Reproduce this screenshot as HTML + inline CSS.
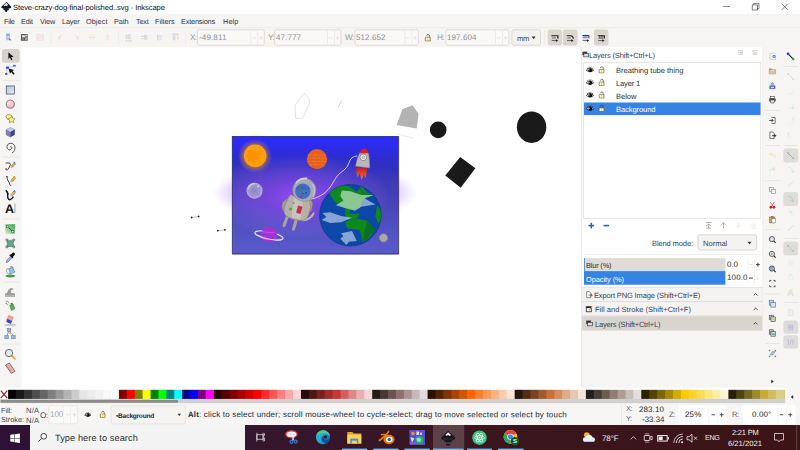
<!DOCTYPE html>
<html><head><meta charset="utf-8"><title>Inkscape</title>
<style>
html,body{margin:0;padding:0;}
body{width:800px;height:450px;overflow:hidden;position:relative;background:#f6f5f4;font-family:"Liberation Sans",sans-serif;}
.t{position:absolute;white-space:nowrap;display:block;transform:rotate(0.03deg);transform-origin:0 0;}
.r{position:absolute;box-sizing:border-box;}
svg{position:absolute;overflow:visible;}
</style></head><body>
<svg style="left:-1px;top:-1px" width="802" height="16"><rect x="1.00" y="1.00" width="800.00" height="14.00" rx="0.00" fill="#ffffff"/></svg>
<span class="t" style="left:13.00px;top:2.74px;font-size:7.6px;line-height:9.12px;color:#111;letter-spacing:-0.084px;">Steve-crazy-dog-final-polished..svg - Inkscape</span>
<svg style="left:0px;top:1px" width="13" height="13"><svg x="0.80" y="0.60" width="11.0" height="11.0" viewBox="0 0 22 22" overflow="visible"><path d="M10.500 1.500Q11.500 0.500 12.500 1.500L20.500 10Q22 12 19.500 13L15 14.500 16.500 17 13.500 17.500 12 21 9 20.500 8 17.500 5 17 6 14.500 2 13Q-0.500 12 1.500 10Z" fill="#15151f"/><path d="M11 2.500L5.500 8 8 9.500 10 8 12 9.500 13.500 7.500 15 7Z" fill="#e4e4ec"/><path d="M4 13.500Q11 16 18 13.500" stroke="#4a4a5a" stroke-width="0.800" fill="none"/></svg></svg>
<svg style="left:0;top:0" width="800" height="14"><path d="M723 6.500h7" stroke="#444" stroke-width="0.600" fill="none"/><path d="M752.300 4.800h5.200v5.200h-5.200z M753.800 4.800v-1.400h5.200v5.200h-1.500" stroke="#333" stroke-width="0.600" fill="none"/><path d="M781.700 3.700l6.200 6.200M787.900 3.700l-6.200 6.200" stroke="#333" stroke-width="0.600" fill="none"/></svg>
<svg style="left:-1px;top:13px" width="802" height="16"><rect x="1.00" y="1.00" width="800.00" height="14.00" rx="0.00" fill="#f6f5f4"/></svg>
<span class="t" style="left:4.00px;top:17.82px;font-size:7.3px;line-height:8.76px;color:#2e3846;letter-spacing:-0.316px;">File</span>
<span class="t" style="left:21.00px;top:17.82px;font-size:7.3px;line-height:8.76px;color:#2e3846;letter-spacing:-0.145px;">Edit</span>
<span class="t" style="left:40.00px;top:17.82px;font-size:7.3px;line-height:8.76px;color:#2e3846;letter-spacing:-0.173px;">View</span>
<span class="t" style="left:62.00px;top:17.82px;font-size:7.3px;line-height:8.76px;color:#2e3846;letter-spacing:-0.152px;">Layer</span>
<span class="t" style="left:86.00px;top:17.82px;font-size:7.3px;line-height:8.76px;color:#2e3846;letter-spacing:0.067px;">Object</span>
<span class="t" style="left:114.00px;top:17.82px;font-size:7.3px;line-height:8.76px;color:#2e3846;letter-spacing:-0.129px;">Path</span>
<span class="t" style="left:136.00px;top:17.82px;font-size:7.3px;line-height:8.76px;color:#2e3846;letter-spacing:-0.222px;">Text</span>
<span class="t" style="left:155.00px;top:17.82px;font-size:7.3px;line-height:8.76px;color:#2e3846;letter-spacing:-0.053px;">Filters</span>
<span class="t" style="left:181.00px;top:17.82px;font-size:7.3px;line-height:8.76px;color:#2e3846;letter-spacing:-0.171px;">Extensions</span>
<span class="t" style="left:222.50px;top:17.82px;font-size:7.3px;line-height:8.76px;color:#2e3846;letter-spacing:0.122px;">Help</span>
<svg style="left:-1px;top:26px" width="802" height="4"><rect x="1.00" y="1.60" width="800.00" height="0.80" rx="0.00" fill="#e4e1de"/></svg>
<svg style="left:-1px;top:27px" width="802" height="22"><rect x="1.00" y="1.40" width="800.00" height="18.80" rx="0.00" fill="#f6f5f4"/></svg>
<svg style="left:3px;top:32px" width="11" height="11"><svg x="0.80" y="0.90" width="9" height="9" viewBox="0 0 16 16" overflow="visible"><rect x="4" y="1" width="7" height="12" fill="#a9c4ec"/><rect x="5" y="2" width="5" height="3" fill="#7ea2dc"/><path d="M5 6h5M5 8h5" stroke="#dfe9f8" stroke-width="0.800"/><path d="M9 9.500l4.500 3.500-2.500 0 1 2.500" fill="#333"/></svg></svg>
<svg style="left:19px;top:32px" width="11" height="11"><svg x="0.80" y="0.90" width="9" height="9" viewBox="0 0 16 16" overflow="visible"><rect x="2" y="2" width="12" height="12" fill="#555"/><rect x="4" y="4" width="5" height="4" fill="#e4e4e4"/><rect x="9.500" y="8" width="3.500" height="5" fill="#aaa"/><rect x="9.500" y="3.500" width="3.500" height="3" fill="#ccc"/><rect x="4" y="9.500" width="4" height="3" fill="#888"/></svg></svg>
<svg style="left:35px;top:32px" width="11" height="11"><svg x="0.80" y="0.90" width="9" height="9" viewBox="0 0 16 16" overflow="visible"><rect x="2" y="3" width="12" height="10" fill="#f6ebe8" stroke="#f0d6d2"/><path d="M4 10l4-4 3 3 3-2" stroke="#e8d6cf" fill="none"/></svg></svg>
<svg style="left:49px;top:29px" width="4" height="17"><rect x="1.60" y="1.50" width="0.70" height="14.50" rx="0.00" fill="#ebe9e6"/></svg>
<svg style="left:56px;top:33px" width="10" height="10"><svg x="0.50" y="0.50" width="8" height="8" viewBox="0 0 16 16" overflow="visible"><path d="M11 3q-6 1-7 6l3 4m-3-4l5-1" stroke="#f7dcc2" stroke-width="2" fill="none"/></svg></svg>
<svg style="left:72px;top:33px" width="10" height="10"><svg x="0.50" y="0.50" width="8" height="8" viewBox="0 0 16 16" overflow="visible"><path d="M5 3q6 1 7 6l-3 4m3-4l-5-1" stroke="#f7dcc2" stroke-width="2" fill="none"/></svg></svg>
<svg style="left:88px;top:33px" width="10" height="10"><svg x="0.00" y="0.50" width="8" height="8" viewBox="0 0 16 16" overflow="visible"><path d="M2 8h12M2 8l4-4M2 8l4 4M14 8l-4-4M14 8l-4 4" stroke="#f8e0c8" stroke-width="1.800" fill="none"/></svg></svg>
<svg style="left:104px;top:34px" width="9" height="9"><svg x="0.20" y="0.00" width="7" height="7" viewBox="0 0 16 16" overflow="visible"><path d="M8 2v12M8 2l-3.500 3.500M8 2l3.500 3.500M8 14l-3.500-3.500M8 14l3.500-3.500" stroke="#f8e0c8" stroke-width="2" fill="none"/></svg></svg>
<svg style="left:117px;top:29px" width="4" height="17"><rect x="1.40" y="1.50" width="0.70" height="14.50" rx="0.00" fill="#ebe9e6"/></svg>
<svg style="left:124px;top:33px" width="11" height="11"><svg x="0.00" y="0.00" width="9" height="9" viewBox="0 0 16 16" overflow="visible"><path d="M2 14h12" stroke="#c9c9cc" stroke-width="1.6"/><rect x="6" y="2" width="6" height="9" fill="#dcdde2"/><path d="M4 3v8" stroke="#cfd0d6" stroke-width="1.5"/></svg></svg>
<svg style="left:140px;top:33px" width="11" height="11"><svg x="0.00" y="0.00" width="9" height="9" viewBox="0 0 16 16" overflow="visible"><rect x="7" y="3" width="6" height="9" fill="#dcdde2"/><path d="M2 6h6M2 10h4" stroke="#cfd0d6" stroke-width="1.5"/></svg></svg>
<svg style="left:155px;top:33px" width="11" height="11"><svg x="0.20" y="0.00" width="9" height="9" viewBox="0 0 16 16" overflow="visible"><rect x="3" y="3" width="3" height="10" fill="#d5d6dc"/><rect x="7" y="4" width="6" height="4" fill="#e0e1e6"/><path d="M7 11h4" stroke="#cfd0d6" stroke-width="1.5"/></svg></svg>
<svg style="left:171px;top:33px" width="11" height="11"><svg x="0.00" y="0.00" width="9" height="9" viewBox="0 0 16 16" overflow="visible"><path d="M2 2h12" stroke="#c9c9cc" stroke-width="1.6"/><rect x="3" y="4" width="5" height="9" fill="#dcdde2"/><path d="M12 4v8" stroke="#cfd0d6" stroke-width="1.5"/></svg></svg>
<svg style="left:184px;top:29px" width="4" height="17"><rect x="1.40" y="1.50" width="0.70" height="14.50" rx="0.00" fill="#ebe9e6"/></svg>
<span class="t" style="left:190.00px;top:32.98px;font-size:8.2px;line-height:9.84px;color:#9a9996;letter-spacing:-0.724px;">X:</span><svg style="left:196px;top:28px" width="70" height="19"><rect x="1.40" y="1.80" width="66.90" height="15.40" rx="1.80" fill="#faf9f8" stroke="#d8d4d0" stroke-width="0.8"/></svg><span class="t" style="left:198.60px;top:33.10px;font-size:8.0px;line-height:9.60px;color:#8b8e96;letter-spacing:0.138px;">-49.811</span><svg style="left:249px;top:29px" width="4" height="17"><rect x="1.50" y="1.00" width="0.70" height="15.00" rx="0.00" fill="#e9e6e3"/></svg><svg style="left:256px;top:29px" width="4" height="17"><rect x="1.40" y="1.00" width="0.70" height="15.00" rx="0.00" fill="#e9e6e3"/></svg><svg style="left:251px;top:36px" width="6" height="4"><rect x="1.30" y="1.60" width="3.60" height="0.70" rx="0.00" fill="#dedcd9"/></svg><svg style="left:258px;top:36px" width="6" height="4"><rect x="1.20" y="1.60" width="3.60" height="0.70" rx="0.00" fill="#dedcd9"/></svg><svg style="left:259px;top:35px" width="4" height="6"><rect x="1.65" y="1.10" width="0.70" height="3.60" rx="0.00" fill="#dedcd9"/></svg>
<span class="t" style="left:267.60px;top:32.98px;font-size:8.2px;line-height:9.84px;color:#9a9996;letter-spacing:-0.748px;">Y:</span><svg style="left:273px;top:28px" width="70" height="19"><rect x="1.70" y="1.80" width="66.20" height="15.40" rx="1.80" fill="#faf9f8" stroke="#d8d4d0" stroke-width="0.8"/></svg><span class="t" style="left:275.90px;top:33.10px;font-size:8.0px;line-height:9.60px;color:#8b8e96;letter-spacing:0.089px;">47.777</span><svg style="left:326px;top:29px" width="3" height="17"><rect x="1.10" y="1.00" width="0.70" height="15.00" rx="0.00" fill="#e9e6e3"/></svg><svg style="left:333px;top:29px" width="3" height="17"><rect x="1.00" y="1.00" width="0.70" height="15.00" rx="0.00" fill="#e9e6e3"/></svg><svg style="left:327px;top:36px" width="7" height="4"><rect x="1.90" y="1.60" width="3.60" height="0.70" rx="0.00" fill="#dedcd9"/></svg><svg style="left:334px;top:36px" width="7" height="4"><rect x="1.80" y="1.60" width="3.60" height="0.70" rx="0.00" fill="#dedcd9"/></svg><svg style="left:336px;top:35px" width="3" height="6"><rect x="1.25" y="1.10" width="0.70" height="3.60" rx="0.00" fill="#dedcd9"/></svg>
<span class="t" style="left:344.60px;top:32.98px;font-size:8.2px;line-height:9.84px;color:#9a9996;letter-spacing:-0.735px;">W:</span><svg style="left:353px;top:28px" width="67" height="19"><rect x="1.90" y="1.80" width="63.50" height="15.40" rx="1.80" fill="#faf9f8" stroke="#d8d4d0" stroke-width="0.8"/></svg><span class="t" style="left:356.10px;top:33.10px;font-size:8.0px;line-height:9.60px;color:#8b8e96;letter-spacing:0.098px;">512.652</span><svg style="left:403px;top:29px" width="4" height="17"><rect x="1.60" y="1.00" width="0.70" height="15.00" rx="0.00" fill="#e9e6e3"/></svg><svg style="left:410px;top:29px" width="4" height="17"><rect x="1.50" y="1.00" width="0.70" height="15.00" rx="0.00" fill="#e9e6e3"/></svg><svg style="left:405px;top:36px" width="7" height="4"><rect x="1.40" y="1.60" width="3.60" height="0.70" rx="0.00" fill="#dedcd9"/></svg><svg style="left:412px;top:36px" width="6" height="4"><rect x="1.30" y="1.60" width="3.60" height="0.70" rx="0.00" fill="#dedcd9"/></svg><svg style="left:413px;top:35px" width="4" height="6"><rect x="1.75" y="1.10" width="0.70" height="3.60" rx="0.00" fill="#dedcd9"/></svg>
<span class="t" style="left:437.20px;top:32.98px;font-size:8.2px;line-height:9.84px;color:#9a9996;letter-spacing:-0.600px;">H:</span><svg style="left:444px;top:28px" width="67" height="19"><rect x="1.90" y="1.80" width="63.10" height="15.40" rx="1.80" fill="#faf9f8" stroke="#d8d4d0" stroke-width="0.8"/></svg><span class="t" style="left:447.10px;top:33.10px;font-size:8.0px;line-height:9.60px;color:#8b8e96;letter-spacing:0.098px;">197.604</span><svg style="left:494px;top:29px" width="3" height="17"><rect x="1.20" y="1.00" width="0.70" height="15.00" rx="0.00" fill="#e9e6e3"/></svg><svg style="left:501px;top:29px" width="3" height="17"><rect x="1.10" y="1.00" width="0.70" height="15.00" rx="0.00" fill="#e9e6e3"/></svg><svg style="left:496px;top:36px" width="6" height="4"><rect x="1.00" y="1.60" width="3.60" height="0.70" rx="0.00" fill="#dedcd9"/></svg><svg style="left:502px;top:36px" width="7" height="4"><rect x="1.90" y="1.60" width="3.60" height="0.70" rx="0.00" fill="#dedcd9"/></svg><svg style="left:504px;top:35px" width="4" height="6"><rect x="1.35" y="1.10" width="0.70" height="3.60" rx="0.00" fill="#dedcd9"/></svg>
<svg style="left:423px;top:33px" width="10" height="10"><svg x="0.50" y="0.50" width="8" height="8" viewBox="0 0 15 15" overflow="visible"><path d="M11.300 7.200V4.600Q11.300 1.800 8.600 1.800T5.800 4.400" stroke="#3a3a3a" stroke-width="1.200" fill="none"/><rect x="3.200" y="7" width="9.800" height="7" rx="0.500" fill="#ead65a" stroke="#44443a" stroke-width="0.900"/><rect x="4.800" y="8.200" width="2.200" height="4.800" fill="#fffdf0"/><rect x="8.800" y="8.200" width="2.200" height="4.800" fill="#fff7b8"/></svg></svg>
<svg style="left:510px;top:28px" width="32" height="19"><rect x="1.90" y="1.80" width="28.60" height="15.40" rx="1.80" fill="#f3f2f0" stroke="#d5d1cd" stroke-width="0.8"/></svg>
<span class="t" style="left:517.00px;top:33.64px;font-size:7.6px;line-height:9.12px;color:#3a4356;letter-spacing:-0.431px;">mm</span>
<svg style="left:531px;top:36px" width="6" height="5"><svg x="0.60" y="0.60" width="4.0" height="3.0" viewBox="0 0 4 3" overflow="visible"><path d="M0 0h4l-2 2.6z" fill="#333"/></svg></svg>
<svg style="left:543px;top:29px" width="3" height="17"><rect x="1.20" y="1.50" width="0.70" height="14.50" rx="0.00" fill="#ebe9e6"/></svg>
<svg style="left:546px;top:28px" width="17" height="19"><rect x="1.70" y="1.40" width="14.20" height="16.20" rx="2.40" fill="#d9d5d1"/></svg>
<svg style="left:561px;top:28px" width="18" height="19"><rect x="1.80" y="1.40" width="14.70" height="16.20" rx="2.40" fill="#d9d5d1"/></svg>
<svg style="left:593px;top:28px" width="17" height="19"><rect x="1.00" y="1.40" width="14.40" height="16.20" rx="2.40" fill="#d9d5d1"/></svg>
<svg style="left:550px;top:33px" width="11" height="11"><svg x="0.30" y="0.50" width="9" height="9" viewBox="0 0 16 16" overflow="visible"><path d="M2 4h11.500v5" stroke="#1e1e1e" stroke-width="2.200" fill="none"/><path d="M3 8h7" stroke="#1e1e1e" stroke-width="1" fill="none"/><path d="M2.500 12.500h9" stroke="#1e1e1e" stroke-width="1.100"/><path d="M10 10l4 2.500-4 2.500z" fill="#1e1e1e"/></svg></svg>
<svg style="left:565px;top:33px" width="11" height="11"><svg x="0.70" y="0.50" width="9" height="9" viewBox="0 0 16 16" overflow="visible"><path d="M2 4h7q4.500 0 4.500 5.500" stroke="#1e1e1e" stroke-width="1.800" fill="none"/><path d="M3 8h6" stroke="#1e1e1e" stroke-width="1" fill="none"/><path d="M2.500 12.500h9" stroke="#1e1e1e" stroke-width="1.100"/><path d="M10 10l4 2.500-4 2.500z" fill="#1e1e1e"/></svg></svg>
<svg style="left:581px;top:33px" width="11" height="11"><svg x="0.30" y="0.50" width="9" height="9" viewBox="0 0 16 16" overflow="visible"><path d="M2 3.500h11.500v5" stroke="#1e1e1e" stroke-width="1.600" fill="none"/><path d="M2.500 6.500h9" stroke="#4a7fe0" stroke-width="2.400"/><path d="M3 9.500h7" stroke="#9ab0d8" stroke-width="1.200" fill="none"/><path d="M2.500 12.500h9" stroke="#1e1e1e" stroke-width="1.100"/><path d="M10 10l4 2.500-4 2.500z" fill="#1e1e1e"/></svg></svg>
<svg style="left:596px;top:33px" width="11" height="11"><svg x="0.70" y="0.50" width="9" height="9" viewBox="0 0 16 16" overflow="visible"><path d="M2 4h11.500v5" stroke="#1e1e1e" stroke-width="2.200" fill="none"/><path d="M5.500 4v4.500M9.500 4v4.500" stroke="#1e1e1e" stroke-width="1.400"/><path d="M3 8.500h9" stroke="#1e1e1e" stroke-width="1" stroke-dasharray="2 1" fill="none"/><path d="M2.500 12.500h9" stroke="#1e1e1e" stroke-width="1.100"/><path d="M10 10l4 2.500-4 2.500z" fill="#1e1e1e"/></svg></svg>
<svg style="left:20px;top:46px" width="563" height="345"><rect x="1.60" y="1.30" width="560.00" height="342.00" rx="0.00" fill="#ffffff"/></svg>
<svg style="left:580px;top:46px" width="4" height="345"><rect x="1.20" y="1.30" width="0.90" height="342.00" rx="0.00" fill="#e6e4e1"/></svg>
<svg style="left:0px;top:48px" width="21" height="16"><rect x="1.90" y="1.00" width="17.70" height="13.70" rx="2.60" fill="#d6d1cd"/></svg>
<svg style="left:5px;top:51px" width="12" height="12"><svg x="0.60" y="0.40" width="9.6" height="9.6" viewBox="0 0 24 24" overflow="visible"><path d="M7 2v17l4-4 3 7 3-1.4-3-6.6h6z" fill="#111"/></svg></svg>
<svg style="left:3px;top:63px" width="15" height="15"><svg x="0.80" y="0.70" width="13" height="13" viewBox="0 0 24 24" overflow="visible"><path d="M4.400 19L6.800 7.400 19.200 3.900" stroke="#a9a9ee" stroke-width="1.100" fill="none"/><rect x="4.300" y="5.200" width="5" height="4.200" fill="#3b3bf0"/><rect x="17" y="2.200" width="5" height="3.200" fill="#5a5af5"/><rect x="2.300" y="17" width="4.400" height="3.800" fill="#5a5af5"/><path d="M8.700 8.900L19 11.500 15.800 13.600 20 18.600 17.600 20.400 13.600 15.400 11.400 18.600z" fill="#111"/></svg></svg>
<svg style="left:1px;top:79px" width="20" height="3"><rect x="1.30" y="1.00" width="17.00" height="0.70" rx="0.00" fill="#e3e0dd"/></svg>
<svg style="left:5px;top:85px" width="12" height="12"><svg x="0.70" y="0.40" width="9.4" height="9.4" viewBox="0 0 10 10" overflow="visible"><defs><linearGradient id="rg" x1="0" y1="0" x2="1" y2="1"><stop offset="0" stop-color="#a9c3e6"/><stop offset="1" stop-color="#e6eef9"/></linearGradient></defs><rect x="0.6" y="0.6" width="8.6" height="8.6" fill="url(#rg)" stroke="#5a5f6b" stroke-width="0.9"/></svg></svg>
<svg style="left:5px;top:99px" width="12" height="12"><svg x="0.60" y="0.50" width="9.4" height="9.4" viewBox="0 0 10 10" overflow="visible"><defs><radialGradient id="cg" cx="0.4" cy="0.35" r="0.7"><stop offset="0" stop-color="#ffe3e6"/><stop offset="1" stop-color="#f5a8b2"/></radialGradient></defs><circle cx="5" cy="5" r="4.3" fill="url(#cg)" stroke="#6b5a5f" stroke-width="0.8"/></svg></svg>
<svg style="left:4px;top:112px" width="14" height="14"><svg x="0.55" y="0.55" width="11.5" height="11.5" viewBox="0 0 24 24" overflow="visible"><path d="M6 4l8 1 3 5-5 6-7-3-2-5z" fill="#f7ec9a" stroke="#8a7a30" stroke-width="1.4"/><path d="M15 8l2 4 5 1-4 3.5 1 5-4.5-2.5-4.500 2.500 1-5-4-3.500 5-1z" fill="#f9f08c" stroke="#8a7a30" stroke-width="1.3"/></svg></svg>
<svg style="left:4px;top:126px" width="14" height="14"><svg x="0.70" y="0.80" width="11.2" height="11.2" viewBox="0 0 24 24" overflow="visible"><path d="M12 2l9 4v11l-9 5-9-5V6z" fill="#8e93c9" stroke="#3c3f6b" stroke-width="0.8"/><path d="M12 2l9 4-9 5-9-5z" fill="#c9ccec"/><path d="M12 11l9-5v11l-9 5z" fill="#3f447f"/><path d="M3 6l9 5v11l-9-5z" fill="#7c81bd"/></svg></svg>
<svg style="left:3px;top:140px" width="15" height="15"><svg x="0.50" y="0.30" width="13" height="13" viewBox="0 0 24 24" overflow="visible"><path d="M12.500 12q1.500-1.500 2.500 0.500t-1 4-5 0.500-2.500-6 5.500-5.500 8 3.500 0 10-4 3.500" stroke="#3a3a3a" stroke-width="1.500" fill="none"/></svg></svg>
<svg style="left:1px;top:155px" width="20" height="4"><rect x="1.30" y="1.60" width="17.00" height="0.70" rx="0.00" fill="#e3e0dd"/></svg>
<svg style="left:4px;top:160px" width="15" height="15"><svg x="0.05" y="0.55" width="12.5" height="12.5" viewBox="0 0 24 24" overflow="visible"><path d="M3 5q5-1 8 0t-1 8-5 5q-2 0-2-1.500t2-1.500" stroke="#222" stroke-width="1.6" fill="none"/><path d="M14 10l5-6 3 2.500-5 6z" fill="#f2b632" stroke="#6b4a10" stroke-width="0.7"/><path d="M17.500 4.500l2-2.500 3 2.500-2 2.500z" fill="#4a90d9"/><path d="M14 10l3 2.500-4 1.500z" fill="#f5e0b0" stroke="#444" stroke-width="0.5"/></svg></svg>
<svg style="left:4px;top:174px" width="15" height="15"><svg x="0.05" y="0.75" width="12.5" height="12.5" viewBox="0 0 24 24" overflow="visible"><path d="M4 3l3 1M6 3q-1 5 2 9t3 7q0 2 3 1" stroke="#222" stroke-width="1.6" fill="none"/><path d="M14 10l5-6 3 2.500-5 6z" fill="#f2b632" stroke="#6b4a10" stroke-width="0.7"/><path d="M17.500 4.500l2-2.500 3 2.500-2 2.500z" fill="#e0a020"/><path d="M14 10l3 2.500-4 1.500z" fill="#f5e0b0" stroke="#444" stroke-width="0.5"/></svg></svg>
<svg style="left:4px;top:188px" width="15" height="15"><svg x="0.05" y="0.85" width="12.5" height="12.5" viewBox="0 0 24 24" overflow="visible"><path d="M4 3q4 4 3 10t4 8q4-1 7-6" stroke="#111" stroke-width="2.6" fill="none"/><path d="M3 3q4 2 5 8" stroke="#111" stroke-width="2" fill="none"/><path d="M14 10l5-6 3 2.500-5 6z" fill="#f2b632" stroke="#6b4a10" stroke-width="0.7"/><path d="M17.500 4.500l2-2.500 3 2.500-2 2.500z" fill="#4a90d9"/><path d="M14 10l3 2.500-4 1.500z" fill="#f5e0b0" stroke="#444" stroke-width="0.5"/></svg></svg>
<span class="t" style="left:4.60px;top:201.90px;font-size:12.5px;line-height:15.00px;color:#111;letter-spacing:0.000px;font-weight:bold;">A</span>
<svg style="left:13px;top:202px" width="4" height="12"><rect x="1.60" y="1.50" width="0.70" height="9.50" rx="0.00" fill="#888"/></svg>
<svg style="left:1px;top:217px" width="20" height="4"><rect x="1.30" y="1.60" width="17.00" height="0.70" rx="0.00" fill="#e3e0dd"/></svg>
<svg style="left:5px;top:224px" width="12" height="12"><svg x="0.30" y="0.20" width="10.0" height="10.0" viewBox="0 0 10 10" overflow="visible"><defs><linearGradient id="gg" x1="0" y1="1" x2="1" y2="0"><stop offset="0" stop-color="#c9efc9"/><stop offset="1" stop-color="#2faa3f"/></linearGradient></defs><rect width="9.600" height="9.600" fill="url(#gg)"/><path d="M2.300 2.600L7.500 7.200" stroke="#333" stroke-width="0.8"/><rect x="1.300" y="1.700" width="2" height="1.800" fill="#eee" stroke="#333" stroke-width="0.5"/><rect x="6.500" y="6.300" width="2" height="1.800" fill="#eee" stroke="#333" stroke-width="0.5"/></svg></svg>
<svg style="left:5px;top:238px" width="12" height="12"><svg x="0.30" y="0.40" width="10.0" height="10.0" viewBox="0 0 10 10" overflow="visible"><path d="M1.500 1.500q3.500 1 7 0q-1 3.500 0 7q-3.500-1-7 0q1-3.500 0-7z" fill="#5aa98a" stroke="#357a5f" stroke-width="0.5"/><g fill="#fff" stroke="#222" stroke-width="0.600"><circle cx="1.500" cy="1.500" r="1"/><circle cx="8.500" cy="1.500" r="1"/><circle cx="1.500" cy="8.500" r="1"/><circle cx="8.500" cy="8.500" r="1"/></g></svg></svg>
<svg style="left:4px;top:251px" width="15" height="15"><svg x="0.05" y="0.55" width="12.5" height="12.5" viewBox="0 0 24 24" overflow="visible"><path d="M4 21l1-4 9-9 3 3-9 9z" fill="#8fb7e8" stroke="#3a4a66" stroke-width="0.9"/><path d="M13 6l3-3q2-2 4 0t0 4l-3 3 1 1-2 2-6-6 2-2z" fill="#111"/></svg></svg>
<svg style="left:4px;top:265px" width="15" height="15"><svg x="0.05" y="0.15" width="12.5" height="12.5" viewBox="0 0 24 24" overflow="visible"><ellipse cx="12" cy="21" rx="9" ry="2.500" fill="#3f9a4a"/><path d="M6 8l10-4 5 9-10 5z" fill="#8fc3e6" stroke="#3a556b" stroke-width="0.8"/><ellipse cx="8" cy="12" rx="3" ry="5.500" fill="#e9f3fb" stroke="#3a556b" stroke-width="0.800" transform="rotate(-20 8 12)"/><path d="M12 3q4-2 6 3" stroke="#555" stroke-width="1.200" fill="none"/></svg></svg>
<svg style="left:1px;top:280px" width="20" height="4"><rect x="1.30" y="1.70" width="17.00" height="0.70" rx="0.00" fill="#e3e0dd"/></svg>
<svg style="left:4px;top:285px" width="15" height="15"><svg x="0.05" y="0.75" width="12.5" height="12.5" viewBox="0 0 24 24" overflow="visible"><path d="M2 21v-6q2-1 4-1 1-7 6-9 5-2 7 3-3-2-5 0t0 6q4 0 7 1v6z" fill="#9a9a9a"/><path d="M2 18h19v3H2z" fill="#b5b5b5"/></svg></svg>
<svg style="left:4px;top:299px" width="15" height="15"><svg x="0.05" y="0.65" width="12.5" height="12.5" viewBox="0 0 24 24" overflow="visible"><path d="M11 11l6-3 4 9-7 4z" fill="#4fb04a" stroke="#2a6a2a" stroke-width="0.800"/><path d="M12 8l3-2 2 2-3 2z" fill="#555"/><path d="M3 3l2 1M6 2l1 2M3 7l3 0M8 5l2 2M5 9l2 1" stroke="#333" stroke-width="1.200"/></svg></svg>
<svg style="left:4px;top:313px" width="15" height="15"><svg x="0.05" y="0.75" width="12.5" height="12.5" viewBox="0 0 24 24" overflow="visible"><path d="M9 3l9 4-4 9-9-4z" fill="#f2a58e" stroke="#9a5a4a" stroke-width="0.600"/><path d="M6.500 10l9 4-2.500 5.500-9-4z" fill="#2d45d8"/><path d="M1 21.500h21" stroke="#555" stroke-width="1"/></svg></svg>
<svg style="left:4px;top:327px" width="15" height="15"><svg x="0.05" y="0.65" width="12.5" height="12.5" viewBox="0 0 24 24" overflow="visible"><path d="M9 6l6 6M9 7l-4 10M16 12l2 5" stroke="#555" stroke-width="1.200"/><rect x="6" y="1.500" width="7" height="6" fill="#8fb7e8" stroke="#4a6a9a" stroke-width="0.800"/><rect x="1.500" y="15.500" width="7" height="6" fill="#8fb7e8" stroke="#4a6a9a" stroke-width="0.800"/><rect x="14.500" y="15.500" width="7" height="6" fill="#8fb7e8" stroke="#4a6a9a" stroke-width="0.800"/><rect x="9.500" y="9.500" width="6" height="3" fill="#f2c230"/></svg></svg>
<svg style="left:1px;top:342px" width="20" height="4"><rect x="1.30" y="1.70" width="17.00" height="0.70" rx="0.00" fill="#e3e0dd"/></svg>
<svg style="left:4px;top:348px" width="15" height="15"><svg x="0.05" y="0.05" width="12.5" height="12.5" viewBox="0 0 24 24" overflow="visible"><path d="M14 14l7 7" stroke="#f2a020" stroke-width="3.200" stroke-linecap="round"/><circle cx="9.500" cy="9.500" r="7" fill="#dce9f7" stroke="#555" stroke-width="1.600"/></svg></svg>
<svg style="left:4px;top:361px" width="15" height="15"><svg x="0.05" y="0.95" width="12.5" height="12.5" viewBox="0 0 24 24" overflow="visible"><path d="M3 6l7-4 11 16-7 4z" fill="#f0b8a8" stroke="#333" stroke-width="1.200"/><path d="M6 8l2-1M8 11l3-1.500M10 14l2-1M12 17l3-1.500" stroke="#8a5a4a" stroke-width="0.800"/></svg></svg>
<svg style="left:0;top:0" width="800" height="450" viewBox="0 0 800 450">
<defs>
<linearGradient id="bgv" x1="0" y1="0" x2="0" y2="1"><stop offset="0" stop-color="#2b2bf6"/><stop offset="0.07" stop-color="#2c2cf0"/><stop offset="0.17" stop-color="#2d2dd2"/><stop offset="0.25" stop-color="#3030be"/><stop offset="0.4" stop-color="#3f3ab6"/><stop offset="0.6" stop-color="#4a46ba"/><stop offset="0.8" stop-color="#5252c2"/><stop offset="1" stop-color="#5a5acb"/></linearGradient>
<radialGradient id="glow" cx="0.5" cy="0.5" r="0.5"><stop offset="0" stop-color="#a04cff" stop-opacity="0.85"/><stop offset="0.4" stop-color="#9048f0" stop-opacity="0.55"/><stop offset="0.75" stop-color="#9a60f5" stop-opacity="0.2"/><stop offset="1" stop-color="#b48aff" stop-opacity="0"/></radialGradient>
<radialGradient id="glow2" cx="0.5" cy="0.5" r="0.5"><stop offset="0" stop-color="#a070ff" stop-opacity="0.9"/><stop offset="0.7" stop-color="#a878ff" stop-opacity="0.5"/><stop offset="0.85" stop-color="#b48aff" stop-opacity="0.28"/><stop offset="1" stop-color="#c8a8ff" stop-opacity="0"/></radialGradient>
<radialGradient id="sung" cx="0.5" cy="0.5" r="0.5"><stop offset="0.6" stop-color="#e08a10" stop-opacity="0.75"/><stop offset="0.8" stop-color="#d88820" stop-opacity="0.3"/><stop offset="1" stop-color="#e09a40" stop-opacity="0"/></radialGradient>
<radialGradient id="sung2" cx="0.5" cy="0.5" r="0.5"><stop offset="0.5" stop-color="#ffc880" stop-opacity="0.5"/><stop offset="1" stop-color="#ffd8a0" stop-opacity="0"/></radialGradient>
<radialGradient id="moong" cx="0.5" cy="0.5" r="0.5"><stop offset="0" stop-color="#8f86cc"/><stop offset="0.7" stop-color="#9c96cc"/><stop offset="1" stop-color="#b9b6d8"/></radialGradient>
<linearGradient id="flame" x1="0" y1="0" x2="0" y2="1"><stop offset="0" stop-color="#c81828"/><stop offset="1" stop-color="#f07838"/></linearGradient>
<clipPath id="artclip"><rect x="232.2" y="136.3" width="166.3" height="117.700"/></clipPath>
<clipPath id="earthclip"><circle cx="350.400" cy="215.200" r="30.600"/></clipPath>
</defs>
<!-- outside glow -->
<ellipse cx="315" cy="193" rx="103" ry="32" fill="url(#glow2)"/>
<ellipse cx="255" cy="150" rx="17" ry="20" fill="url(#sung2)" opacity="0.6"/>
<rect x="232.2" y="136.300" width="166.300" height="117.700" fill="url(#bgv)"/>
<g clip-path="url(#artclip)">
<ellipse cx="298" cy="196" rx="92" ry="42" fill="url(#glow)"/>
<!-- sun -->
<circle cx="255" cy="156" r="17" fill="url(#sung)"/>
<circle cx="255.200" cy="155.800" r="11.200" fill="#ffa008"/>
<path d="M248 152l2-3 2 3 3-3 2 4 3-2 1 4-3 1 2 3-4 1-2 3-3-2-3 1 0-4-3-1 2-2z" fill="#f88a04" opacity="0.650"/>
<!-- mars -->
<circle cx="317" cy="159.200" r="10.100" fill="#e6621c"/>
<path d="M308.500 155h16M307.500 158h18M307.500 161.500h19M309 164.500h15" stroke="#f08a50" stroke-width="0.600" stroke-dasharray="3 1.500 5 1" fill="none" opacity="0.800"/>
<!-- bubble moon -->
<circle cx="254.500" cy="190.700" r="8" fill="url(#moong)"/>
<path d="M248.500 189q1-5 6-5.500" stroke="#e8e6f6" stroke-width="1.100" fill="none" opacity="0.850"/>
<circle cx="258" cy="186.500" r="0.700" fill="#f4f2fc"/>
<!-- saturn -->
<ellipse cx="269" cy="235.500" rx="14.300" ry="3.600" fill="none" stroke="#e2ccf2" stroke-width="1.200" transform="rotate(12 269 235.500)"/>
<circle cx="269" cy="234.600" r="7.800" fill="#a231d6"/>
<path d="M262 231.500q7 2 14 0.500M261.500 238q7 2.500 14.500 1" stroke="#b755e6" stroke-width="1.100" fill="none"/>
<path d="M254.700 235.500A14.300 3.600 0 0 0 283.300 235.500" fill="none" stroke="#e2ccf2" stroke-width="1.200" transform="rotate(12 269 235.500)"/>
<!-- earth -->
<circle cx="350.400" cy="215.200" r="30.800" fill="#0b48a8" stroke="#1a3478" stroke-width="0.700"/>
<g clip-path="url(#earthclip)">
<path d="M329 193L338 184 348.900 186.500 356.700 192 361.300 186 367.500 192.800 373.800 195.100 362.900 199.800 359.800 208.300 350.400 209.900 349.700 213.800 359.800 213.800 356.700 218.400 347.300 220 345 213 345.800 209.100 334.900 202.100z" fill="#0e8a1c"/>
<path d="M345 222.300L355.100 218.400 367.500 220.800 375.300 230.100 369.100 237.900 362.900 242.500 359.800 230.100 347.300 228.500z" fill="#0e8a1c"/>
<path d="M367.500 220.800L375.300 230.100 362.900 242.500 364.400 231.700z" fill="#0a6f22"/>
<path d="M376.900 205.200L380.800 209.900 381.500 218.400 378.400 223.900 375.300 216.100z" fill="#0e8a1c"/>
<path d="M360 188l4 6 10 1 3 8-2 12" stroke="#0a4498" stroke-width="0.800" fill="none" opacity="0.600"/>
<path d="M341.900 190.400L350.400 191.200 361.300 195.100 373.800 195.100 364.400 198.200 375.300 204.400 361.300 206.800 355.100 210.700 345.800 208.300 335.700 205.200 343.400 200.600 340.300 195.900z" fill="#ffffff" opacity="0.520"/>
<path d="M322.400 213L330.200 212.200 341.100 216.100 352 217.700 341.100 222.300 330.200 223.100 321.700 220 326.300 216.900z" fill="#ffffff" opacity="0.500"/>
<path d="M341.100 233.200L352 230.900 356.700 241 348.900 241.800 346.500 244.900 340.300 238.700 343.400 236.300z" fill="#ffffff" opacity="0.500"/>
</g>
<!-- small moon -->
<circle cx="383.600" cy="237.900" r="4.200" fill="#a9a9a6" stroke="#85858a" stroke-width="0.600"/>
<!-- tube -->
<path d="M305.500 199.300C314 199.600 320.500 196.400 325.300 192.400S332.300 183.500 335.600 178.400 340.500 173 343.200 170.700 347.200 167 348.400 164.300 350.300 158.800 352.200 157.700 355 156 357.300 156.100" stroke="#f6f2fc" stroke-width="0.800" fill="none"/>
<!-- rocket -->
<path d="M356.300 167.500q-0.300 5 1.200 10 1.300-3 2-4.500 0.800 3.500 2.200 6.700 1.600-3 2-5.500 1 2.500 2 3.800 1.400-5 1.300-10.500z" fill="url(#flame)"/>
<path d="M355.500 166.200q1.500-8 4-13.200h9q1.200 7 1.200 15z" fill="#b9b9bd" stroke="#7c7c84" stroke-width="0.600"/>
<path d="M359.500 153.200q1.500-3.800 5-5 3.200 1.200 4 5z" fill="#e21a24"/>
<circle cx="363.300" cy="157.300" r="3.300" fill="#f2f2f4" stroke="#66666c" stroke-width="0.700"/>
<circle cx="363.300" cy="157.300" r="1.400" fill="#d8d8dc" stroke="#77777c" stroke-width="0.500"/>
<!-- astronaut dog -->
<g>
<path d="M302.500 220q7 0.500 11-6.500" stroke="#b9b4ae" stroke-width="2.200" fill="none" stroke-linecap="round"/>
<path d="M287.400 216.500L284 225.500M296 220.500L293.500 229.200" stroke="#aaa49c" stroke-width="3" stroke-linecap="round"/>
<path d="M287 199q-6 3-5 9 1 4 4 5z" fill="#a39d96" stroke="#857f78" stroke-width="0.500"/>
<path d="M308 199q5 1 4.500 6t-3 8z" fill="#a39d96" stroke="#857f78" stroke-width="0.500"/>
<path d="M290.500 194.500q9 5 19 5.500 2.500 6-0.500 14-2.500 6.500-7 6.500-8 0.500-16-4.500-3.500-4-1-11 2-6 5.500-10.500z" fill="#b6b0a9" stroke="#827c76" stroke-width="0.600"/>
<path d="M294 198q4 2 9 2.500l-2.500 19q-5-0.500-9-2.500z" fill="#c9c5c0" opacity="0.900"/>
<rect x="297" y="206" width="4.600" height="7.600" fill="#c8304a" transform="rotate(16 299.300 209.800)"/>
<circle cx="290.600" cy="209.100" r="1.500" fill="#36b43a"/>
<circle cx="293.500" cy="203" r="0.900" fill="#8a857c"/>
<circle cx="304.300" cy="189.900" r="11.600" fill="#a9a9b3" stroke="#8a8a94" stroke-width="0.700"/>
<path d="M296 183q4-5 11-4.500" stroke="#d8d8e2" stroke-width="1.800" fill="none" opacity="0.900"/>
<path d="M313 184q3 6 0 13" stroke="#c4c4d0" stroke-width="1.600" fill="none" opacity="0.800"/>
<circle cx="302.800" cy="191.300" r="7.800" fill="#3f74c2"/>
<path d="M296 188q7-4 14 0l-1 2-12 0z" fill="#3a69b6"/>
<circle cx="300.600" cy="189.200" r="0.900" fill="#6a7a3a"/>
<circle cx="306.200" cy="192.800" r="0.900" fill="#3a3a80"/>
<ellipse cx="301.200" cy="196.600" rx="1.100" ry="1.400" fill="#c82a3a"/>
<circle cx="302.800" cy="193.500" r="0.600" fill="#1a2a55"/>
</g>
</g>
<rect x="232.200" y="136.300" width="166.300" height="117.700" fill="none" stroke="#181c50" stroke-width="0.600"/>
<path d="M398.800 136.500V254.300H232.400" stroke="#4a4a5a" stroke-width="0.600" fill="none" opacity="0.700"/>
<!-- other canvas objects -->
<path d="M304.400 93.100L309.100 99.400 309.500 103 302.800 118.300 295.600 118.300 295 105z" fill="none" stroke="#d2d2d2" stroke-width="0.600"/>
<path d="M338.100 107.200L341.700 100.600" stroke="#b0b0b0" stroke-width="0.600"/>
<path d="M402.500 109.100L412.500 105.200 418.600 113.700 416.700 128.600 396.600 125z" fill="#b3b3b3"/>
<path d="M397.100 134L414.200 138.200" stroke="#dcdcdc" stroke-width="0.600"/>
<circle cx="438.200" cy="129.900" r="8.300" fill="#1a1a1a"/>
<ellipse cx="531.600" cy="127.200" rx="14.700" ry="15.700" fill="#1a1a1a"/>
<path d="M460.200 157L475.400 168.300 460.700 187.800 445.300 175.600z" fill="#1a1a1a"/>
<g stroke="#999" stroke-width="0.600"><path d="M191.300 217.500L199 216.400M217.500 230.700L225.200 229.800"/></g>
<g fill="#222"><circle cx="191.600" cy="217.500" r="0.900"/><circle cx="198.700" cy="216.400" r="0.900"/><circle cx="217.800" cy="230.700" r="0.900"/><circle cx="224.900" cy="229.800" r="0.900"/></g>
</svg>
<svg style="left:581px;top:46px" width="183" height="243"><rect x="1.10" y="1.30" width="180.50" height="240.30" rx="0.00" fill="#ffffff"/></svg>
<svg style="left:582px;top:50px" width="9" height="9"><svg x="0.00" y="0.80" width="7" height="7" viewBox="0 0 16 16" overflow="visible"><rect x="1" y="2" width="11" height="8" fill="#333" /><rect x="4" y="6" width="11" height="8" fill="#d8d8d8" stroke="#333" stroke-width="1.400"/></svg></svg>
<span class="t" style="left:589.20px;top:50.80px;font-size:7.5px;line-height:9.00px;color:#36435a;letter-spacing:-0.161px;">Layers (Shift+Ctrl+L)</span>
<svg style="left:738px;top:50px" width="8" height="8"><svg x="0.10" y="0.00" width="5.4" height="5.4" viewBox="0 0 16 16" overflow="visible"><rect x="2" y="2" width="12" height="12" fill="none" stroke="#b5b3b0" stroke-width="1.400"/><path d="M5 8h6M8 5v6" stroke="#8a8886" stroke-width="1.400"/></svg></svg>
<svg style="left:752px;top:50px" width="8" height="8"><svg x="0.30" y="0.00" width="5.4" height="5.4" viewBox="0 0 16 16" overflow="visible"><rect x="2" y="2" width="12" height="12" fill="none" stroke="#b5b3b0" stroke-width="1.400"/><path d="M5 5l6 6M11 5l-6 6" stroke="#8a8886" stroke-width="1.400"/></svg></svg>
<svg style="left:582px;top:61px" width="181" height="159"><rect x="1.60" y="1.40" width="177.20" height="155.90" rx="0.00" fill="#ffffff" stroke="#e3e0dd" stroke-width="0.8"/></svg>
<svg style="left:583px;top:101px" width="179" height="16"><rect x="1.00" y="1.50" width="176.50" height="12.60" rx="0.00" fill="#3584e4"/></svg>
<svg style="left:586px;top:65px" width="10" height="10"><svg x="0.10" y="0.60" width="7.8" height="7.8" viewBox="0 0 16 16" overflow="visible"><path d="M0.500 9.500Q8 1.500 15.500 9.500 8 16 0.500 9.500z" fill="#fff" stroke="#111" stroke-width="1.500"/><ellipse cx="8.500" cy="9.500" rx="4" ry="3.800" fill="#0a0a0a"/><circle cx="6" cy="8.500" r="1.200" fill="#fff"/><path d="M2.500 4.500l1.500 2.200M6 2.500l0.600 2.600M10 2.500l-0.600 2.600M13.500 4.500l-1.500 2.200" stroke="#111" stroke-width="1.300"/></svg></svg><svg style="left:597px;top:65px" width="10" height="10"><svg x="0.50" y="0.80" width="7.6" height="7.6" viewBox="0 0 15 15" overflow="visible"><path d="M11.300 7.200V4.600Q11.300 1.800 8.600 1.800T5.800 4.400" stroke="#3a3a3a" stroke-width="1.200" fill="none"/><rect x="3.200" y="7" width="9.800" height="7" rx="0.500" fill="#ead65a" stroke="#44443a" stroke-width="0.900"/><rect x="4.800" y="8.200" width="2.200" height="4.800" fill="#fffdf0"/><rect x="8.800" y="8.200" width="2.200" height="4.800" fill="#fff7b8"/></svg></svg><span class="t" style="left:616.00px;top:66.44px;font-size:7.6px;line-height:9.12px;color:#2e3436;letter-spacing:-0.031px;">Breathing tube thing</span>
<svg style="left:586px;top:78px" width="10" height="10"><svg x="0.10" y="0.20" width="7.8" height="7.8" viewBox="0 0 16 16" overflow="visible"><path d="M0.500 9.500Q8 1.500 15.500 9.500 8 16 0.500 9.500z" fill="#fff" stroke="#111" stroke-width="1.500"/><ellipse cx="8.500" cy="9.500" rx="4" ry="3.800" fill="#0a0a0a"/><circle cx="6" cy="8.500" r="1.200" fill="#fff"/><path d="M2.500 4.500l1.500 2.200M6 2.500l0.600 2.600M10 2.500l-0.600 2.600M13.500 4.500l-1.500 2.200" stroke="#111" stroke-width="1.300"/></svg></svg><svg style="left:597px;top:78px" width="10" height="10"><svg x="0.50" y="0.40" width="7.6" height="7.6" viewBox="0 0 15 15" overflow="visible"><path d="M11.300 7.200V4.600Q11.300 1.800 8.600 1.800T5.800 4.400" stroke="#3a3a3a" stroke-width="1.200" fill="none"/><rect x="3.200" y="7" width="9.800" height="7" rx="0.500" fill="#ead65a" stroke="#44443a" stroke-width="0.900"/><rect x="4.800" y="8.200" width="2.200" height="4.800" fill="#fffdf0"/><rect x="8.800" y="8.200" width="2.200" height="4.800" fill="#fff7b8"/></svg></svg><span class="t" style="left:616.00px;top:79.04px;font-size:7.6px;line-height:9.12px;color:#2e3436;letter-spacing:-0.164px;">Layer 1</span>
<svg style="left:586px;top:90px" width="10" height="10"><svg x="0.10" y="0.80" width="7.8" height="7.8" viewBox="0 0 16 16" overflow="visible"><path d="M0.500 9.500Q8 1.500 15.500 9.500 8 16 0.500 9.500z" fill="#fff" stroke="#111" stroke-width="1.500"/><ellipse cx="8.500" cy="9.500" rx="4" ry="3.800" fill="#0a0a0a"/><circle cx="6" cy="8.500" r="1.200" fill="#fff"/><path d="M2.500 4.500l1.500 2.200M6 2.500l0.600 2.600M10 2.500l-0.600 2.600M13.500 4.500l-1.500 2.200" stroke="#111" stroke-width="1.300"/></svg></svg><svg style="left:597px;top:91px" width="10" height="10"><svg x="0.50" y="0.00" width="7.6" height="7.6" viewBox="0 0 15 15" overflow="visible"><path d="M11.300 7.200V4.600Q11.300 1.800 8.600 1.800T5.800 4.400" stroke="#3a3a3a" stroke-width="1.200" fill="none"/><rect x="3.200" y="7" width="9.800" height="7" rx="0.500" fill="#ead65a" stroke="#44443a" stroke-width="0.900"/><rect x="4.800" y="8.200" width="2.200" height="4.800" fill="#fffdf0"/><rect x="8.800" y="8.200" width="2.200" height="4.800" fill="#fff7b8"/></svg></svg><span class="t" style="left:616.00px;top:91.64px;font-size:7.6px;line-height:9.12px;color:#2e3436;letter-spacing:-0.060px;">Below</span>
<svg style="left:586px;top:104px" width="10" height="10"><svg x="0.10" y="0.20" width="7.8" height="7.8" viewBox="0 0 16 16" overflow="visible"><path d="M0.500 9.500Q8 1.500 15.500 9.500 8 16 0.500 9.500z" fill="#fff" stroke="#111" stroke-width="1.500"/><ellipse cx="8.500" cy="9.500" rx="4" ry="3.800" fill="#0a0a0a"/><circle cx="6" cy="8.500" r="1.200" fill="#fff"/><path d="M2.500 4.500l1.500 2.200M6 2.500l0.600 2.600M10 2.500l-0.600 2.600M13.500 4.500l-1.500 2.200" stroke="#111" stroke-width="1.300"/></svg></svg><svg style="left:597px;top:104px" width="10" height="10"><svg x="0.50" y="0.40" width="7.6" height="7.6" viewBox="0 0 15 15" overflow="visible"><path d="M11.300 7.200V4.600Q11.300 1.800 8.600 1.800T5.800 4.400" stroke="#3a3a3a" stroke-width="1.200" fill="none"/><rect x="3.200" y="7" width="9.800" height="7" rx="0.500" fill="#ead65a" stroke="#44443a" stroke-width="0.900"/><rect x="4.800" y="8.200" width="2.200" height="4.800" fill="#fffdf0"/><rect x="8.800" y="8.200" width="2.200" height="4.800" fill="#fff7b8"/></svg></svg><span class="t" style="left:616.00px;top:105.04px;font-size:7.6px;line-height:9.12px;color:#ffffff;letter-spacing:-0.106px;">Background</span>
<svg style="left:587px;top:223px" width="9" height="5"><rect x="1.50" y="1.80" width="5.60" height="1.60" rx="0.00" fill="#3465a4"/></svg><svg style="left:589px;top:221px" width="5" height="9"><rect x="1.50" y="1.80" width="1.60" height="5.60" rx="0.00" fill="#3465a4"/></svg>
<svg style="left:602px;top:223px" width="9" height="5"><rect x="1.50" y="1.80" width="5.60" height="1.60" rx="0.00" fill="#3465a4"/></svg>
<svg style="left:704px;top:221px" width="10" height="10"><svg x="0.70" y="0.30" width="7.8" height="7.8" viewBox="0 0 16 16" overflow="visible"><path d="M2 2.500h12M3 14h10M8 5.500v8M2.500 10L8 5.500 13.500 10" stroke="#8d8c8a" stroke-width="1.300" fill="none"/></svg></svg>
<svg style="left:719px;top:221px" width="10" height="10"><svg x="0.60" y="0.30" width="7.8" height="7.8" viewBox="0 0 16 16" overflow="visible"><path d="M8 3v11M2 8.500L8 3l6 5.500" stroke="#8d8c8a" stroke-width="1.300" fill="none"/></svg></svg>
<svg style="left:734px;top:221px" width="10" height="10"><svg x="0.50" y="0.30" width="7.8" height="7.8" viewBox="0 0 16 16" overflow="visible"><path d="M8 2v11M2 7.500L8 13l6-5.500" stroke="#e2e0de" stroke-width="1.300" fill="none"/></svg></svg>
<svg style="left:749px;top:221px" width="10" height="10"><svg x="0.60" y="0.30" width="7.8" height="7.8" viewBox="0 0 16 16" overflow="visible"><path d="M2 14h12M8 2v8.500M2.500 6L8 10.500 13.500 6" stroke="#e2e0de" stroke-width="1.300" fill="none"/></svg></svg>
<span class="t" style="left:652.00px;top:239.14px;font-size:7.6px;line-height:9.12px;color:#36435a;letter-spacing:-0.152px;">Blend mode:</span>
<svg style="left:696px;top:233px" width="63" height="19"><rect x="1.90" y="1.80" width="58.80" height="15.20" rx="2.00" fill="#f4f3f1" stroke="#d3cfcb" stroke-width="0.8"/></svg>
<span class="t" style="left:702.80px;top:238.94px;font-size:7.6px;line-height:9.12px;color:#36435a;letter-spacing:-0.032px;">Normal</span>
<svg style="left:747px;top:241px" width="6" height="5"><svg x="0.50" y="0.80" width="4.0" height="3.0" viewBox="0 0 4 3" overflow="visible"><path d="M0 0h4l-2 2.600z" fill="#333"/></svg></svg>
<svg style="left:583px;top:253px" width="179" height="3"><rect x="1.00" y="1.20" width="177.00" height="0.70" rx="0.00" fill="#e8e6e3"/></svg>
<svg style="left:583px;top:257px" width="144" height="16"><rect x="1.00" y="1.10" width="141.40" height="13.00" rx="0.00" fill="#dfdcd8"/></svg>
<svg style="left:583px;top:257px" width="3" height="16"><rect x="1.00" y="1.10" width="0.80" height="13.00" rx="0.00" fill="#3584e4"/></svg>
<svg style="left:583px;top:270px" width="144" height="16"><rect x="1.00" y="1.10" width="141.40" height="13.60" rx="0.00" fill="#3584e4"/></svg>
<span class="t" style="left:585.60px;top:261.86px;font-size:7.4px;line-height:8.88px;color:#2e2a28;letter-spacing:-0.165px;">Blur (%)</span>
<span class="t" style="left:585.60px;top:275.76px;font-size:7.4px;line-height:8.88px;color:#ffffff;letter-spacing:-0.059px;">Opacity (%)</span>
<span class="t" style="left:726.60px;top:259.60px;font-size:8px;line-height:9.60px;color:#2e2a28;letter-spacing:-0.040px;">0.0</span>
<span class="t" style="left:726.60px;top:273.00px;font-size:8px;line-height:9.60px;color:#2e2a28;letter-spacing:0.117px;">100.0</span>
<svg style="left:746px;top:257px" width="4" height="29"><rect x="1.60" y="1.50" width="0.60" height="26.00" rx="0.00" fill="#ebe9e6"/></svg><svg style="left:753px;top:257px" width="3" height="29"><rect x="1.40" y="1.50" width="0.60" height="26.00" rx="0.00" fill="#ebe9e6"/></svg>
<svg style="left:748px;top:263px" width="6" height="3"><rect x="1.20" y="1.30" width="3.60" height="0.70" rx="0.00" fill="#dcdad7"/></svg>
<svg style="left:755px;top:263px" width="6" height="4"><rect x="1.00" y="1.20" width="3.80" height="0.90" rx="0.00" fill="#2e2a28"/></svg><svg style="left:756px;top:261px" width="4" height="7"><rect x="1.45" y="1.75" width="0.90" height="3.80" rx="0.00" fill="#2e2a28"/></svg>
<svg style="left:748px;top:276px" width="6" height="4"><rect x="1.00" y="1.60" width="3.80" height="0.90" rx="0.00" fill="#2e2a28"/></svg>
<svg style="left:755px;top:276px" width="6" height="4"><rect x="1.00" y="1.70" width="3.60" height="0.70" rx="0.00" fill="#e0deda"/></svg><svg style="left:756px;top:275px" width="4" height="6"><rect x="1.45" y="1.25" width="0.70" height="3.60" rx="0.00" fill="#e0deda"/></svg>
<svg style="left:581px;top:286px" width="183" height="4"><rect x="1.10" y="1.40" width="180.50" height="0.70" rx="0.00" fill="#d9d6d2"/></svg>
<svg style="left:581px;top:287px" width="183" height="16"><rect x="1.10" y="1.10" width="180.50" height="13.20" rx="0.00" fill="#f4f3f1"/></svg>
<svg style="left:581px;top:300px" width="183" height="3"><rect x="1.10" y="1.30" width="180.50" height="0.70" rx="0.00" fill="#d5d1cd"/></svg>
<svg style="left:581px;top:301px" width="183" height="16"><rect x="1.10" y="1.00" width="180.50" height="13.70" rx="0.00" fill="#f4f3f1"/></svg>
<svg style="left:581px;top:314px" width="183" height="4"><rect x="1.10" y="1.70" width="180.50" height="0.70" rx="0.00" fill="#cfcbc7"/></svg>
<svg style="left:581px;top:315px" width="183" height="17"><rect x="1.10" y="1.40" width="180.50" height="14.20" rx="0.00" fill="#d8d4d0"/></svg>
<svg style="left:761px;top:46px" width="4" height="286"><rect x="1.60" y="1.30" width="0.60" height="283.30" rx="0.00" fill="#ebe9e6"/></svg>
<svg style="left:752px;top:291px" width="8" height="8"><svg x="0.80" y="0.90" width="5.6" height="5.6" viewBox="0 0 12 12" overflow="visible"><path d="M2 7.500l4-4 4 4" stroke="#2e2e2e" stroke-width="1.900" fill="none"/></svg></svg>
<svg style="left:752px;top:306px" width="8" height="8"><svg x="0.80" y="0.40" width="5.6" height="5.6" viewBox="0 0 12 12" overflow="visible"><path d="M2 7.500l4-4 4 4" stroke="#2e2e2e" stroke-width="1.900" fill="none"/></svg></svg>
<svg style="left:752px;top:320px" width="8" height="8"><svg x="0.80" y="0.80" width="5.6" height="5.6" viewBox="0 0 12 12" overflow="visible"><path d="M2 7.500l4-4 4 4" stroke="#2e2e2e" stroke-width="1.900" fill="none"/></svg></svg>
<svg style="left:585px;top:291px" width="10" height="10"><svg x="0.30" y="0.00" width="7.4" height="7.4" viewBox="0 0 16 16" overflow="visible"><path d="M3 1.500h6l3 3v10H3z" fill="#fff" stroke="#333" stroke-width="1.200"/><path d="M7 9h8M12 6l3 3-3 3" stroke="#333" stroke-width="1.400" fill="none"/></svg></svg>
<span class="t" style="left:594.40px;top:290.70px;font-size:7.5px;line-height:9.00px;color:#36435a;letter-spacing:-0.137px;">Export PNG Image (Shift+Ctrl+E)</span>
<svg style="left:585px;top:305px" width="10" height="10"><svg x="0.30" y="0.30" width="7.4" height="7.4" viewBox="0 0 16 16" overflow="visible"><rect x="2" y="3" width="11" height="11" fill="#fff" stroke="#222" stroke-width="1.600"/><path d="M2 3h11v3H2z" fill="#222"/><path d="M8 10l6-8 1.500 1.500-6 7.500z" fill="#f2c230" stroke="#333" stroke-width="0.500"/></svg></svg>
<span class="t" style="left:594.60px;top:305.10px;font-size:7.5px;line-height:9.00px;color:#36435a;letter-spacing:0.032px;">Fill and Stroke (Shift+Ctrl+F)</span>
<svg style="left:585px;top:319px" width="9" height="9"><svg x="0.80" y="0.70" width="7" height="7" viewBox="0 0 16 16" overflow="visible"><rect x="1" y="2" width="11" height="8" fill="#333" /><rect x="4" y="6" width="11" height="8" fill="#d8d8d8" stroke="#333" stroke-width="1.400"/></svg></svg>
<span class="t" style="left:594.80px;top:319.60px;font-size:7.5px;line-height:9.00px;color:#36435a;letter-spacing:-0.185px;">Layers (Shift+Ctrl+L)</span>
<svg style="left:768px;top:52px" width="10" height="10"><svg x="0.45" y="0.45" width="7.9" height="7.9" viewBox="0 0 16 16" overflow="visible"><path d="M3 1.500h8l3 3v10H3z" fill="#fdfdfd" stroke="#9a9a9a" stroke-width="0.800"/><circle cx="11.500" cy="8" r="3" fill="#3f6fd0"/><path d="M11.500 6.500v3M10 8h3" stroke="#fff" stroke-width="1"/></svg></svg>
<svg style="left:768px;top:67px" width="10" height="10"><svg x="0.45" y="0.05" width="7.9" height="7.9" viewBox="0 0 16 16" overflow="visible"><path d="M1.500 3.500h5l1.500 2h6.500v8.500h-13z" fill="#c9a877" stroke="#8a6f45" stroke-width="0.800"/><path d="M1.500 7.500h13v6.500h-13z" fill="#dcc096"/><rect x="4" y="6" width="8" height="3" fill="#e9e9e6" stroke="#999" stroke-width="0.500"/></svg></svg>
<svg style="left:768px;top:81px" width="10" height="10"><svg x="0.45" y="0.55" width="7.9" height="7.9" viewBox="0 0 16 16" overflow="visible"><path d="M2.500 8.500h11v6h-11z" fill="#3f74c8" stroke="#2a4f95" stroke-width="0.800"/><path d="M8 1.500l3.500 4h-2v4h-3v-4h-2z" fill="#9fb4d8" stroke="#55657f" stroke-width="0.700"/><rect x="5" y="10.500" width="6" height="2.500" fill="#dfe7f5"/></svg></svg>
<svg style="left:768px;top:95px" width="10" height="10"><svg x="0.45" y="0.75" width="7.9" height="7.9" viewBox="0 0 16 16" overflow="visible"><rect x="3.500" y="1.500" width="9" height="4.500" fill="#fff" stroke="#222" stroke-width="1.100"/><path d="M2 6h12v5H2z" fill="#555" stroke="#222" stroke-width="0.800"/><path d="M3.500 8.500h9l-1 6h-7z" fill="#f4f4f4" stroke="#222" stroke-width="1.100"/><path d="M5.500 11h5M5.500 12.800h5" stroke="#999" stroke-width="0.600"/></svg></svg>
<svg style="left:764px;top:109px" width="17" height="3"><rect x="1.20" y="1.00" width="14.80" height="0.70" rx="0.00" fill="#e2dfdc"/></svg>
<svg style="left:768px;top:116px" width="10" height="10"><svg x="0.45" y="0.45" width="7.9" height="7.9" viewBox="0 0 16 16" overflow="visible"><path d="M6 2h7.500v12H6" fill="#fff" stroke="#222" stroke-width="1.300"/><path d="M1.500 8h8M6.500 5l3 3-3 3" stroke="#111" stroke-width="1.600" fill="none"/></svg></svg>
<svg style="left:768px;top:131px" width="10" height="10"><svg x="0.45" y="0.25" width="7.9" height="7.9" viewBox="0 0 16 16" overflow="visible"><path d="M3 1.500h5.500l3 3V14.500H3z" fill="#fff" stroke="#222" stroke-width="1.300"/><path d="M7 9h8M12 6l3 3-3 3" stroke="#111" stroke-width="1.600" fill="none"/></svg></svg>
<svg style="left:764px;top:144px" width="17" height="3"><rect x="1.20" y="1.20" width="14.80" height="0.70" rx="0.00" fill="#e2dfdc"/></svg>
<svg style="left:768px;top:151px" width="11" height="11"><svg x="0.15" y="0.35" width="8.5" height="8.5" viewBox="0 0 16 16" overflow="visible"><path d="M13 12q1-6-5-6H4M7 3L3.500 6 7 9" stroke="#f7e7a8" stroke-width="2.200" fill="none"/></svg></svg>
<svg style="left:768px;top:165px" width="11" height="11"><svg x="0.15" y="0.85" width="8.5" height="8.5" viewBox="0 0 16 16" overflow="visible"><path d="M3 12q-1-6 5-6h4M9 3l3.500 3L9 9" stroke="#d3ecc4" stroke-width="2.200" fill="none"/></svg></svg>
<svg style="left:764px;top:179px" width="17" height="4"><rect x="1.20" y="1.40" width="14.80" height="0.70" rx="0.00" fill="#e2dfdc"/></svg>
<svg style="left:768px;top:186px" width="11" height="11"><svg x="0.15" y="0.25" width="8.5" height="8.5" viewBox="0 0 16 16" overflow="visible"><rect x="2" y="2" width="8" height="8" fill="#f4f4f4" stroke="#777" stroke-width="1"/><rect x="6" y="6" width="8" height="8" fill="#f4f4f4" stroke="#777" stroke-width="1"/></svg></svg>
<svg style="left:768px;top:201px" width="10" height="10"><svg x="0.45" y="0.25" width="7.9" height="7.9" viewBox="0 0 16 16" overflow="visible"><path d="M4 1.500l5 8M12 1.500l-5 8" stroke="#444" stroke-width="1.200"/><ellipse cx="5" cy="12" rx="2.800" ry="3" fill="#d41f1f"/><ellipse cx="11" cy="12" rx="2.800" ry="3" fill="#d41f1f"/></svg></svg>
<svg style="left:768px;top:215px" width="10" height="10"><svg x="0.45" y="0.75" width="7.9" height="7.9" viewBox="0 0 16 16" overflow="visible"><rect x="2" y="2.500" width="11" height="12" fill="#d9a441" stroke="#7a5a1a" stroke-width="0.900"/><rect x="5.500" y="1" width="4" height="3" fill="#999" stroke="#444" stroke-width="0.600"/><rect x="7" y="6" width="7" height="8.500" fill="#fdfdfd" stroke="#555" stroke-width="0.800"/></svg></svg>
<svg style="left:764px;top:228px" width="17" height="3"><rect x="1.20" y="1.30" width="14.80" height="0.70" rx="0.00" fill="#e2dfdc"/></svg>
<svg style="left:768px;top:235px" width="10" height="10"><svg x="0.45" y="0.65" width="7.9" height="7.9" viewBox="0 0 16 16" overflow="visible"><circle cx="7" cy="7" r="5.300" fill="#e4ecf6" stroke="#333" stroke-width="1.500"/><path d="M11 11l3.500 3.500" stroke="#222" stroke-width="2.200"/><rect x="4" y="5" width="6" height="4" fill="#fff" stroke="#789" stroke-width="0.700"/></svg></svg>
<svg style="left:768px;top:250px" width="10" height="10"><svg x="0.45" y="0.45" width="7.9" height="7.9" viewBox="0 0 16 16" overflow="visible"><circle cx="7" cy="7" r="5.300" fill="#e4ecf6" stroke="#333" stroke-width="1.500"/><path d="M11 11l3.500 3.500" stroke="#222" stroke-width="2.200"/><path d="M4.500 9l2-4.500 1.500 2.500 2-1z" fill="#f2c230" stroke="#555" stroke-width="0.500"/></svg></svg>
<svg style="left:768px;top:265px" width="10" height="10"><svg x="0.45" y="0.05" width="7.9" height="7.9" viewBox="0 0 16 16" overflow="visible"><circle cx="7" cy="7" r="5.300" fill="#e4ecf6" stroke="#333" stroke-width="1.500"/><path d="M11 11l3.500 3.500" stroke="#222" stroke-width="2.200"/><rect x="4.500" y="3.500" width="5" height="7" fill="#8fb0e0" stroke="#345" stroke-width="0.700"/></svg></svg>
<svg style="left:768px;top:279px" width="11" height="11"><svg x="0.15" y="0.35" width="8.5" height="8.5" viewBox="0 0 16 16" overflow="visible"><path d="M3 2v3M3 2h3M13 2v3M13 2h-3M3 14v-3M3 14h3M13 14v-3M13 14h-3" stroke="#111" stroke-width="1.300" fill="none"/><rect x="5" y="4.500" width="6" height="7" fill="#e6e6e6"/></svg></svg>
<svg style="left:764px;top:292px" width="17" height="4"><rect x="1.20" y="1.60" width="14.80" height="0.70" rx="0.00" fill="#e2dfdc"/></svg>
<svg style="left:768px;top:299px" width="10" height="10"><svg x="0.45" y="0.95" width="7.9" height="7.9" viewBox="0 0 16 16" overflow="visible"><rect x="1.500" y="1.500" width="9" height="9" fill="#bcd3ee" stroke="#334e78" stroke-width="1"/><rect x="5" y="5" width="9.500" height="9.500" fill="#dbe7f6" stroke="#334e78" stroke-width="1"/></svg></svg>
<svg style="left:768px;top:314px" width="10" height="10"><svg x="0.45" y="0.45" width="7.9" height="7.9" viewBox="0 0 16 16" overflow="visible"><rect x="1.500" y="1.500" width="9" height="9" fill="#aab9cc" stroke="#333" stroke-width="1"/><rect x="5" y="5" width="9.500" height="9.500" fill="#c5d2e0" stroke="#333" stroke-width="1"/><rect x="7.500" y="9" width="5" height="3" fill="#f2c230"/></svg></svg>
<svg style="left:768px;top:329px" width="10" height="10"><svg x="0.45" y="0.05" width="7.9" height="7.9" viewBox="0 0 16 16" overflow="visible"><rect x="1.500" y="1.500" width="9" height="9" fill="#aab9cc" stroke="#333" stroke-width="1"/><rect x="5" y="5" width="9.500" height="9.500" fill="#c5d2e0" stroke="#333" stroke-width="1"/><rect x="7.500" y="9" width="5" height="3" fill="#58b04a"/></svg></svg>
<svg style="left:764px;top:342px" width="17" height="3"><rect x="1.20" y="1.30" width="14.80" height="0.70" rx="0.00" fill="#e2dfdc"/></svg>
<svg style="left:768px;top:349px" width="10" height="10"><svg x="0.45" y="0.55" width="7.9" height="7.9" viewBox="0 0 16 16" overflow="visible"><path d="M3 11l5-7h6l-5 7z" fill="#a9c0dc" stroke="#5a6f8c" stroke-width="0.800"/><path d="M1.500 1.500h2M1.500 1.500v2M14.500 1.500h-2M14.500 1.500v2M1.500 14.500h2M1.500 14.500v-2M14.500 14.500h-2M14.500 14.500v-2" stroke="#111" stroke-width="1.200"/></svg></svg>
<svg style="left:770px;top:379px" width="6" height="6"><svg x="0.90" y="0.40" width="3.2" height="4.0" viewBox="0 0 4 5" overflow="visible"><path d="M0.500 0l3 2.500-3 2.500z" fill="#2a2a2a"/></svg></svg>
<svg style="left:786px;top:51px" width="11" height="11"><svg x="0.10" y="0.90" width="9" height="9" viewBox="0 0 16 16" overflow="visible"><path d="M4 4l8 8" stroke="#111" stroke-width="1.800"/><circle cx="3.500" cy="3.500" r="2.300" fill="#2f2fe0"/><circle cx="12.500" cy="12.500" r="2.300" fill="#2f9a55"/></svg></svg>
<svg style="left:782px;top:65px" width="18" height="3"><rect x="1.60" y="1.30" width="14.60" height="0.70" rx="0.00" fill="#e2dfdc"/></svg>
<svg style="left:786px;top:72px" width="11" height="11"><svg x="0.10" y="0.00" width="9" height="9" viewBox="0 0 16 16" overflow="visible"><path d="M4 4l8 8" stroke="#d5d3e8" stroke-width="1.500"/><circle cx="3.500" cy="3.500" r="2" fill="#d9d6f5"/><circle cx="12.500" cy="12.500" r="2" fill="#cfe6d8"/></svg></svg>
<svg style="left:786px;top:86px" width="11" height="11"><svg x="0.10" y="0.30" width="9" height="9" viewBox="0 0 16 16" overflow="visible"><path d="M3 13h10V3" stroke="#e3ece4" stroke-width="1.300" fill="none"/></svg></svg>
<svg style="left:786px;top:101px" width="11" height="11"><svg x="0.10" y="0.50" width="9" height="9" viewBox="0 0 16 16" overflow="visible"><path d="M3 12h10M12 3v10" stroke="#e0e9e1" stroke-width="1.300" fill="none"/><circle cx="12" cy="12" r="1.600" fill="#cfe3d3"/></svg></svg>
<svg style="left:786px;top:116px" width="11" height="11"><svg x="0.10" y="0.30" width="9" height="9" viewBox="0 0 16 16" overflow="visible"><path d="M3 13h10V5" stroke="#e6ebe6" stroke-width="1.300" fill="none"/><circle cx="13" cy="4" r="1.500" fill="#cfe6d3"/></svg></svg>
<svg style="left:786px;top:130px" width="11" height="11"><svg x="0.10" y="0.50" width="9" height="9" viewBox="0 0 16 16" overflow="visible"><path d="M4 4v9h9" stroke="#e6ebe6" stroke-width="1.300" fill="none"/><circle cx="4.500" cy="5" r="1.500" fill="#cfe6d3"/></svg></svg>
<svg style="left:782px;top:144px" width="18" height="3"><rect x="1.60" y="1.20" width="14.60" height="0.70" rx="0.00" fill="#e2dfdc"/></svg>
<svg style="left:782px;top:147px" width="18" height="17"><rect x="1.40" y="1.50" width="14.80" height="13.90" rx="2.60" fill="#dedcd8"/></svg>
<svg style="left:786px;top:151px" width="11" height="11"><svg x="0.10" y="0.10" width="9" height="9" viewBox="0 0 16 16" overflow="visible"><path d="M4 4l8 8" stroke="#9a98b8" stroke-width="1.500"/><circle cx="3.500" cy="3.500" r="1.800" fill="#a9a4ea"/><circle cx="12.500" cy="12.500" r="1.800" fill="#9fc9ae"/></svg></svg>
<svg style="left:786px;top:165px" width="11" height="11"><svg x="0.10" y="0.50" width="9" height="9" viewBox="0 0 16 16" overflow="visible"><path d="M4 3q8 1 8 9M9.500 10l2.500 3 2-3" stroke="#cfe6d3" stroke-width="1.300" fill="none"/></svg></svg>
<svg style="left:786px;top:179px" width="11" height="11"><svg x="0.10" y="0.70" width="9" height="9" viewBox="0 0 16 16" overflow="visible"><path d="M3 12L13 3" stroke="#cfe6d3" stroke-width="1.500"/></svg></svg>
<svg style="left:782px;top:191px" width="18" height="16"><rect x="1.40" y="1.00" width="14.80" height="14.00" rx="2.60" fill="#dedcd8"/></svg>
<svg style="left:786px;top:194px" width="11" height="11"><svg x="0.10" y="0.50" width="9" height="9" viewBox="0 0 16 16" overflow="visible"><path d="M4 3q8 1 8 9M9.500 10l2.500 3 2-3" stroke="#a9cdb6" stroke-width="1.400" fill="none"/></svg></svg>
<svg style="left:786px;top:208px" width="11" height="11"><svg x="0.10" y="0.30" width="9" height="9" viewBox="0 0 16 16" overflow="visible"><path d="M4 3q7 2 7 9M3 8l8-3" stroke="#cfe6d3" stroke-width="1.300" fill="none"/></svg></svg>
<svg style="left:786px;top:223px" width="11" height="11"><svg x="0.10" y="0.50" width="9" height="9" viewBox="0 0 16 16" overflow="visible"><path d="M3 13L8 8" stroke="#f1c4c4" stroke-width="1.500"/><path d="M8 8L13 3" stroke="#c4e3cc" stroke-width="1.500"/></svg></svg>
<svg style="left:782px;top:237px" width="18" height="3"><rect x="1.60" y="1.30" width="14.60" height="0.70" rx="0.00" fill="#e2dfdc"/></svg>
<svg style="left:782px;top:240px" width="18" height="17"><rect x="1.40" y="1.60" width="14.80" height="13.70" rx="2.60" fill="#dedcd8"/></svg>
<svg style="left:786px;top:244px" width="11" height="11"><svg x="0.10" y="0.00" width="9" height="9" viewBox="0 0 16 16" overflow="visible"><path d="M4 4l8 8" stroke="#b9c9c6" stroke-width="1.400"/><circle cx="3.500" cy="3.500" r="1.700" fill="#a9a4ea"/><circle cx="12.500" cy="12.500" r="1.700" fill="#9fc9ae"/></svg></svg>
<svg style="left:786px;top:258px" width="11" height="11"><svg x="0.10" y="0.40" width="9" height="9" viewBox="0 0 16 16" overflow="visible"><rect x="4" y="4" width="8" height="8" fill="none" stroke="#e9ece9" stroke-width="1.200"/><circle cx="8" cy="8" r="1.300" fill="#cfe6d3"/></svg></svg>
<svg style="left:786px;top:272px" width="11" height="11"><svg x="0.10" y="0.30" width="9" height="9" viewBox="0 0 16 16" overflow="visible"><rect x="4" y="5" width="8" height="8" fill="none" stroke="#e9ece9" stroke-width="1.200"/><path d="M8 2v4" stroke="#cfe6d3" stroke-width="1.200"/></svg></svg>
<span class="t" style="left:787.20px;top:286.90px;font-size:9.5px;line-height:11.40px;color:#d3e3d6;letter-spacing:0.000px;font-weight:bold;">A</span>
<svg style="left:782px;top:301px" width="18" height="3"><rect x="1.60" y="1.20" width="14.60" height="0.70" rx="0.00" fill="#e2dfdc"/></svg>
<svg style="left:786px;top:308px" width="11" height="11"><svg x="0.10" y="0.10" width="9" height="9" viewBox="0 0 16 16" overflow="visible"><path d="M4 2.500h6l2 2v9H4z" fill="#f0efee" stroke="#dedcda" stroke-width="1"/></svg></svg>
<svg style="left:782px;top:319px" width="18" height="16"><rect x="1.40" y="1.50" width="14.80" height="13.30" rx="2.60" fill="#dedcd8"/></svg>
<svg style="left:786px;top:322px" width="11" height="11"><svg x="0.10" y="0.70" width="9" height="9" viewBox="0 0 16 16" overflow="visible"><path d="M3 5.500h10M3 8.500h10M3 11.500h10M5.500 3v11M8.500 3v11M11.500 3v11" stroke="#b3aee6" stroke-width="0.900"/></svg></svg>
<svg style="left:782px;top:334px" width="18" height="16"><rect x="1.40" y="1.30" width="14.80" height="13.30" rx="2.60" fill="#dedcd8"/></svg>
<svg style="left:786px;top:337px" width="11" height="11"><svg x="0.10" y="0.50" width="9" height="9" viewBox="0 0 16 16" overflow="visible"><path d="M4 3v10M12 3v10M6.500 13l3-10" stroke="#b3aee6" stroke-width="1.200"/></svg></svg>
<svg style="left:-1px;top:388px" width="787" height="3"><rect x="1.00" y="1.00" width="785.00" height="0.60" rx="0.00" fill="#ffffff"/></svg>
<svg style="left:0;top:389px" width="786" height="11"><g transform="translate(0,0.80)"><rect x="0" y="-1" width="8.10" height="10.5" fill="#ffffff"/><path d="M0.800 0.900L7.300 8.300M7.300 0.900L0.800 8.300" stroke="#8e1822" stroke-width="1.100"/><rect x="8.10" y="-1" width="776.70" height="10.5" fill="#000000"/><rect x="16.02" y="-1" width="768.78" height="10.5" fill="#1a1a1a"/><rect x="23.93" y="-1" width="760.87" height="10.5" fill="#333333"/><rect x="31.84" y="-1" width="752.95" height="10.5" fill="#4d4d4d"/><rect x="39.76" y="-1" width="745.04" height="10.5" fill="#666666"/><rect x="47.68" y="-1" width="737.12" height="10.5" fill="#808080"/><rect x="55.59" y="-1" width="729.21" height="10.5" fill="#999999"/><rect x="63.51" y="-1" width="721.29" height="10.5" fill="#b3b3b3"/><rect x="71.42" y="-1" width="713.38" height="10.5" fill="#cccccc"/><rect x="79.33" y="-1" width="705.46" height="10.5" fill="#e6e6e6"/><rect x="87.25" y="-1" width="697.55" height="10.5" fill="#ececec"/><rect x="95.16" y="-1" width="689.63" height="10.5" fill="#f2f2f2"/><rect x="103.08" y="-1" width="681.72" height="10.5" fill="#f9f9f9"/><rect x="110.99" y="-1" width="673.80" height="10.5" fill="#ffffff"/><rect x="118.91" y="-1" width="665.89" height="10.5" fill="#800000"/><rect x="126.82" y="-1" width="657.97" height="10.5" fill="#ff0000"/><rect x="134.74" y="-1" width="650.06" height="10.5" fill="#808000"/><rect x="142.66" y="-1" width="642.14" height="10.5" fill="#ffff00"/><rect x="150.57" y="-1" width="634.23" height="10.5" fill="#008000"/><rect x="158.48" y="-1" width="626.31" height="10.5" fill="#00ff00"/><rect x="166.40" y="-1" width="618.40" height="10.5" fill="#008080"/><rect x="174.31" y="-1" width="610.48" height="10.5" fill="#00ffff"/><rect x="182.23" y="-1" width="602.57" height="10.5" fill="#000080"/><rect x="190.14" y="-1" width="594.65" height="10.5" fill="#0000ff"/><rect x="198.06" y="-1" width="586.74" height="10.5" fill="#800080"/><rect x="205.97" y="-1" width="578.82" height="10.5" fill="#ff00ff"/><rect x="213.89" y="-1" width="570.91" height="10.5" fill="#2b0000"/><rect x="221.81" y="-1" width="562.99" height="10.5" fill="#550000"/><rect x="229.72" y="-1" width="555.08" height="10.5" fill="#800000"/><rect x="237.63" y="-1" width="547.16" height="10.5" fill="#aa0000"/><rect x="245.55" y="-1" width="539.25" height="10.5" fill="#d40000"/><rect x="253.47" y="-1" width="531.33" height="10.5" fill="#ff0000"/><rect x="261.38" y="-1" width="523.42" height="10.5" fill="#ff2a2a"/><rect x="269.30" y="-1" width="515.50" height="10.5" fill="#ff5555"/><rect x="277.21" y="-1" width="507.59" height="10.5" fill="#ff8080"/><rect x="285.12" y="-1" width="499.67" height="10.5" fill="#ffaaaa"/><rect x="293.04" y="-1" width="491.76" height="10.5" fill="#ffd5d5"/><rect x="300.96" y="-1" width="483.84" height="10.5" fill="#280b0b"/><rect x="308.87" y="-1" width="475.93" height="10.5" fill="#501616"/><rect x="316.79" y="-1" width="468.01" height="10.5" fill="#782121"/><rect x="324.70" y="-1" width="460.10" height="10.5" fill="#a02c2c"/><rect x="332.62" y="-1" width="452.18" height="10.5" fill="#c83737"/><rect x="340.53" y="-1" width="444.27" height="10.5" fill="#d35f5f"/><rect x="348.45" y="-1" width="436.35" height="10.5" fill="#de8787"/><rect x="356.36" y="-1" width="428.44" height="10.5" fill="#e9afaf"/><rect x="364.28" y="-1" width="420.52" height="10.5" fill="#f4d7d7"/><rect x="372.19" y="-1" width="412.61" height="10.5" fill="#241c1c"/><rect x="380.11" y="-1" width="404.69" height="10.5" fill="#483737"/><rect x="388.02" y="-1" width="396.78" height="10.5" fill="#6c5353"/><rect x="395.94" y="-1" width="388.86" height="10.5" fill="#916f6f"/><rect x="403.85" y="-1" width="380.95" height="10.5" fill="#ac9393"/><rect x="411.77" y="-1" width="373.03" height="10.5" fill="#c8b7b7"/><rect x="419.68" y="-1" width="365.12" height="10.5" fill="#e3dbdb"/><rect x="427.60" y="-1" width="357.20" height="10.5" fill="#2b1100"/><rect x="435.51" y="-1" width="349.29" height="10.5" fill="#552200"/><rect x="443.43" y="-1" width="341.37" height="10.5" fill="#803300"/><rect x="451.34" y="-1" width="333.46" height="10.5" fill="#aa4400"/><rect x="459.26" y="-1" width="325.54" height="10.5" fill="#d45500"/><rect x="467.17" y="-1" width="317.63" height="10.5" fill="#ff6600"/><rect x="475.09" y="-1" width="309.71" height="10.5" fill="#ff7f2a"/><rect x="483.00" y="-1" width="301.80" height="10.5" fill="#ff9955"/><rect x="490.92" y="-1" width="293.88" height="10.5" fill="#ffb380"/><rect x="498.83" y="-1" width="285.97" height="10.5" fill="#ffccaa"/><rect x="506.75" y="-1" width="278.05" height="10.5" fill="#ffe6d5"/><rect x="514.66" y="-1" width="270.14" height="10.5" fill="#28170b"/><rect x="522.58" y="-1" width="262.22" height="10.5" fill="#502d16"/><rect x="530.49" y="-1" width="254.31" height="10.5" fill="#784421"/><rect x="538.40" y="-1" width="246.39" height="10.5" fill="#a05a2c"/><rect x="546.32" y="-1" width="238.48" height="10.5" fill="#c87137"/><rect x="554.24" y="-1" width="230.56" height="10.5" fill="#d38d5f"/><rect x="562.15" y="-1" width="222.65" height="10.5" fill="#deaa87"/><rect x="570.07" y="-1" width="214.73" height="10.5" fill="#e9c6af"/><rect x="577.98" y="-1" width="206.82" height="10.5" fill="#f4e3d7"/><rect x="585.89" y="-1" width="198.90" height="10.5" fill="#241f1c"/><rect x="593.81" y="-1" width="190.99" height="10.5" fill="#483e37"/><rect x="601.73" y="-1" width="183.07" height="10.5" fill="#6c5d53"/><rect x="609.64" y="-1" width="175.16" height="10.5" fill="#917c6f"/><rect x="617.56" y="-1" width="167.24" height="10.5" fill="#ac9d93"/><rect x="625.47" y="-1" width="159.33" height="10.5" fill="#c8beb7"/><rect x="633.38" y="-1" width="151.41" height="10.5" fill="#e3dedb"/><rect x="641.30" y="-1" width="143.50" height="10.5" fill="#2b2200"/><rect x="649.22" y="-1" width="135.58" height="10.5" fill="#554400"/><rect x="657.13" y="-1" width="127.67" height="10.5" fill="#806600"/><rect x="665.05" y="-1" width="119.75" height="10.5" fill="#aa8800"/><rect x="672.96" y="-1" width="111.84" height="10.5" fill="#d4aa00"/><rect x="680.88" y="-1" width="103.92" height="10.5" fill="#ffcc00"/><rect x="688.79" y="-1" width="96.01" height="10.5" fill="#ffd42a"/><rect x="696.71" y="-1" width="88.09" height="10.5" fill="#ffdd55"/><rect x="704.62" y="-1" width="80.18" height="10.5" fill="#ffe680"/><rect x="712.54" y="-1" width="72.26" height="10.5" fill="#ffeeaa"/><rect x="720.45" y="-1" width="64.35" height="10.5" fill="#fff6d5"/><rect x="728.37" y="-1" width="56.43" height="10.5" fill="#28220b"/><rect x="736.28" y="-1" width="48.52" height="10.5" fill="#504416"/><rect x="744.20" y="-1" width="40.60" height="10.5" fill="#786721"/><rect x="752.11" y="-1" width="32.69" height="10.5" fill="#a0892c"/><rect x="760.02" y="-1" width="24.77" height="10.5" fill="#c8ab37"/><rect x="767.94" y="-1" width="16.86" height="10.5" fill="#d3bc5f"/><rect x="775.86" y="-1" width="8.94" height="10.5" fill="#decd87"/><rect x="0" y="-2" width="786" height="2" fill="#ffffff"/></g></svg>
<svg style="left:-1px;top:397px" width="787" height="8"><rect x="1.00" y="1.90" width="785.00" height="4.50" rx="0.00" fill="#d0d0d0"/></svg>
<svg style="left:-1px;top:399px" width="181" height="5"><rect x="1.50" y="1.00" width="177.70" height="2.75" rx="1.40" fill="#8b8b8b"/></svg>
<svg style="left:790px;top:395px" width="6" height="6"><svg x="0.40" y="0.00" width="3.2" height="4.0" viewBox="0 0 4 5" overflow="visible"><path d="M3.500 0l-3 2.500 3 2.500z" fill="#2a2a2a"/></svg></svg>
<svg style="left:-1px;top:402px" width="802" height="24"><rect x="1.00" y="1.40" width="800.00" height="21.60" rx="0.00" fill="#f6f5f4"/></svg>
<span class="t" style="left:0.60px;top:406.62px;font-size:7.3px;line-height:8.76px;color:#3c4858;letter-spacing:-0.071px;">Fill:</span>
<span class="t" style="left:0.60px;top:416.02px;font-size:7.3px;line-height:8.76px;color:#3c4858;letter-spacing:-0.018px;">Stroke:</span>
<span class="t" style="left:25.80px;top:406.44px;font-size:7.6px;line-height:9.12px;color:#3c4858;letter-spacing:0.177px;">N/A</span>
<span class="t" style="left:25.80px;top:415.84px;font-size:7.6px;line-height:9.12px;color:#3c4858;letter-spacing:0.177px;">N/A</span>
<span class="t" style="left:40.00px;top:410.68px;font-size:8.2px;line-height:9.84px;color:#3c4858;letter-spacing:-0.628px;">O:</span>
<svg style="left:47px;top:404px" width="32" height="22"><rect x="1.85" y="1.75" width="28.80" height="18.10" rx="1.65" fill="#faf9f8" stroke="#e3e0dd" stroke-width="0.7"/></svg>
<span class="t" style="left:50.00px;top:410.38px;font-size:8.2px;line-height:9.84px;color:#a6a8ad;letter-spacing:-0.160px;">100</span>
<svg style="left:62px;top:405px" width="3" height="20"><rect x="1.40" y="1.00" width="0.60" height="17.60" rx="0.00" fill="#eceae7"/></svg><svg style="left:69px;top:405px" width="3" height="20"><rect x="1.40" y="1.00" width="0.60" height="17.60" rx="0.00" fill="#eceae7"/></svg>
<svg style="left:65px;top:413px" width="6" height="4"><rect x="1.30" y="1.40" width="3.30" height="0.70" rx="0.00" fill="#dad8d5"/></svg><svg style="left:71px;top:413px" width="7" height="4"><rect x="1.80" y="1.40" width="3.30" height="0.70" rx="0.00" fill="#dad8d5"/></svg><svg style="left:73px;top:412px" width="3" height="6"><rect x="1.10" y="1.10" width="0.70" height="3.30" rx="0.00" fill="#dad8d5"/></svg>
<svg style="left:84px;top:411px" width="9" height="9"><svg x="0.40" y="0.10" width="6.8" height="6.8" viewBox="0 0 16 16" overflow="visible"><path d="M0.500 9.500Q8 1.500 15.500 9.500 8 16 0.500 9.500z" fill="#fff" stroke="#111" stroke-width="1.500"/><ellipse cx="8.500" cy="9.500" rx="4" ry="3.800" fill="#0a0a0a"/><circle cx="6" cy="8.500" r="1.200" fill="#fff"/><path d="M2.500 4.500l1.500 2.200M6 2.500l0.600 2.600M10 2.500l-0.600 2.600M13.500 4.500l-1.500 2.200" stroke="#111" stroke-width="1.300"/></svg></svg>
<svg style="left:98px;top:410px" width="10" height="10"><svg x="0.70" y="0.50" width="7.4" height="7.4" viewBox="0 0 15 15" overflow="visible"><path d="M11.300 7.200V4.600Q11.300 1.800 8.600 1.800T5.800 4.400" stroke="#3a3a3a" stroke-width="1.200" fill="none"/><rect x="3.200" y="7" width="9.800" height="7" rx="0.500" fill="#ead65a" stroke="#44443a" stroke-width="0.900"/><rect x="4.800" y="8.200" width="2.200" height="4.800" fill="#fffdf0"/><rect x="8.800" y="8.200" width="2.200" height="4.800" fill="#fff7b8"/></svg></svg>
<svg style="left:109px;top:404px" width="78" height="22"><rect x="2.15" y="1.65" width="74.50" height="18.30" rx="2.05" fill="#f5f4f2" stroke="#e0ddd9" stroke-width="0.7"/></svg>
<span class="t" style="left:115.80px;top:411.54px;font-size:6.6px;line-height:7.92px;color:#1e2a3c;letter-spacing:-0.256px;font-weight:bold;">•Background</span>
<svg style="left:177px;top:413px" width="6" height="5"><svg x="0.50" y="0.70" width="3.6" height="2.8" viewBox="0 0 4 3" overflow="visible"><path d="M0 0h4l-2 2.600z" fill="#333"/></svg></svg>
<span class="t" style="left:187.80px;top:410.02px;font-size:7.8px;line-height:9.36px;color:#1e2430;letter-spacing:0.201px;font-weight:bold;">Alt</span>
<span class="t" style="left:199.00px;top:409.90px;font-size:8px;line-height:9.60px;color:#242b38;letter-spacing:0.192px;">: click to select under; scroll mouse-wheel to cycle-select; drag to move selected or select by touch</span>
<span class="t" style="left:626.20px;top:405.36px;font-size:7.4px;line-height:8.88px;color:#5c6573;letter-spacing:-0.496px;">X:</span>
<span class="t" style="left:626.20px;top:415.36px;font-size:7.4px;line-height:8.88px;color:#5c6573;letter-spacing:-0.292px;">Y:</span>
<span class="t" style="left:639.20px;top:405.00px;font-size:8px;line-height:9.60px;color:#262b2e;letter-spacing:0.089px;">283.10</span>
<span class="t" style="left:641.80px;top:415.06px;font-size:7.9px;line-height:9.48px;color:#262b2e;letter-spacing:0.017px;">-33.34</span>
<span class="t" style="left:669.00px;top:410.34px;font-size:7.6px;line-height:9.12px;color:#5c6573;letter-spacing:-0.277px;">Z:</span>
<svg style="left:620px;top:404px" width="3" height="22"><rect x="1.40" y="1.00" width="0.60" height="19.50" rx="0.00" fill="#e6e3e0"/></svg>
<svg style="left:677px;top:403px" width="51" height="23"><rect x="1.70" y="1.70" width="48.30" height="19.80" rx="2.00" fill="#ffffff"/></svg>
<svg style="left:707px;top:404px" width="4" height="22"><rect x="1.50" y="1.00" width="0.60" height="19.20" rx="0.00" fill="#eeecea"/></svg><svg style="left:716px;top:404px" width="4" height="22"><rect x="1.60" y="1.00" width="0.60" height="19.20" rx="0.00" fill="#eeecea"/></svg>
<span class="t" style="left:685.40px;top:409.60px;font-size:8px;line-height:9.60px;color:#1c2024;letter-spacing:0.130px;">25%</span>
<svg style="left:710px;top:413px" width="6" height="4"><rect x="1.50" y="1.40" width="3.40" height="0.80" rx="0.00" fill="#2e2a28"/></svg>
<svg style="left:718px;top:413px" width="7" height="4"><rect x="1.70" y="1.40" width="4.00" height="0.80" rx="0.00" fill="#2e2a28"/></svg><svg style="left:720px;top:411px" width="4" height="7"><rect x="1.30" y="1.80" width="0.80" height="4.00" rx="0.00" fill="#2e2a28"/></svg>
<span class="t" style="left:732.40px;top:410.34px;font-size:7.6px;line-height:9.12px;color:#5c6573;letter-spacing:-0.600px;">R:</span>
<svg style="left:742px;top:403px" width="55" height="23"><rect x="1.10" y="1.70" width="52.70" height="19.80" rx="2.00" fill="#ffffff"/></svg>
<svg style="left:776px;top:404px" width="4" height="22"><rect x="1.60" y="1.00" width="0.60" height="19.20" rx="0.00" fill="#eeecea"/></svg><svg style="left:785px;top:404px" width="4" height="22"><rect x="1.70" y="1.00" width="0.60" height="19.20" rx="0.00" fill="#eeecea"/></svg>
<span class="t" style="left:752.20px;top:409.60px;font-size:8px;line-height:9.60px;color:#1c2024;letter-spacing:0.127px;">0.00°</span>
<svg style="left:778px;top:413px" width="7" height="4"><rect x="1.80" y="1.40" width="3.40" height="0.80" rx="0.00" fill="#2e2a28"/></svg>
<svg style="left:787px;top:413px" width="7" height="4"><rect x="1.20" y="1.40" width="4.00" height="0.80" rx="0.00" fill="#2e2a28"/></svg><svg style="left:788px;top:411px" width="4" height="7"><rect x="1.80" y="1.80" width="0.80" height="4.00" rx="0.00" fill="#2e2a28"/></svg>
<div class="r" style="left:0.00px;top:425.00px;width:800.00px;height:25.00px;background:#2f1434;background:linear-gradient(90deg,#2e1236 0%,#34162f 30%,#3a161f 60%,#3c1416 100%);"></div>
<svg style="left:29px;top:424px" width="217" height="27"><rect x="1.00" y="1.00" width="215.00" height="25.00" rx="0.00" fill="#f3f3f3"/></svg>
<svg style="left:10px;top:433px" width="12" height="12"><svg x="0.30" y="0.40" width="9.6" height="9.6" viewBox="0 0 16 16" overflow="visible"><path d="M0 2.300l6.500-0.900v6.100H0zM7.300 1.300L16 0v7.500H7.300zM0 8.300h6.500v6.200L0 13.600zM7.300 8.300H16V16l-8.700-1.200z" fill="#ffffff"/></svg></svg>
<svg style="left:37px;top:432px" width="12" height="12"><svg x="0.50" y="0.50" width="10.0" height="10.0" viewBox="0 0 16 16" overflow="visible"><circle cx="10" cy="6" r="4.600" fill="none" stroke="#222" stroke-width="1.300"/><path d="M6.700 9.300L1.500 14.500" stroke="#222" stroke-width="1.400"/></svg></svg>
<span class="t" style="left:55.00px;top:432.78px;font-size:9.2px;line-height:11.04px;color:#2b2b2b;letter-spacing:0.089px;">Type here to search</span>
<svg style="left:432px;top:424px" width="33" height="27"><rect x="1.00" y="1.00" width="30.60" height="25.00" rx="0.00" fill="rgba(255,255,255,0.180)"/></svg>
<svg style="left:462px;top:424px" width="4" height="27"><rect x="1.60" y="1.50" width="0.60" height="24.00" rx="0.00" fill="rgba(255,255,255,0.250)"/></svg>
<svg style="left:341px;top:447px" width="27" height="4"><rect x="1.00" y="1.60" width="25.00" height="1.40" rx="0.00" fill="#76b9ed"/></svg>
<svg style="left:372px;top:447px" width="28" height="4"><rect x="1.40" y="1.60" width="25.00" height="1.40" rx="0.00" fill="#76b9ed"/></svg>
<svg style="left:403px;top:447px" width="28" height="4"><rect x="1.40" y="1.60" width="25.40" height="1.40" rx="0.00" fill="#76b9ed"/></svg>
<svg style="left:432px;top:447px" width="33" height="4"><rect x="1.00" y="1.60" width="30.60" height="1.40" rx="0.00" fill="#76b9ed"/></svg>
<svg style="left:466px;top:447px" width="27" height="4"><rect x="1.00" y="1.60" width="25.00" height="1.40" rx="0.00" fill="#76b9ed"/></svg>
<svg style="left:497px;top:447px" width="28" height="4"><rect x="1.00" y="1.60" width="25.60" height="1.40" rx="0.00" fill="#76b9ed"/></svg>
<svg style="left:253px;top:430px" width="15" height="15"><svg x="0.75" y="0.95" width="12.5" height="12.5" viewBox="0 0 28 28" overflow="visible"><path d="M7 4v20M21 4v20" stroke="#f0e8ee" stroke-width="1.600"/><rect x="7" y="8.500" width="14" height="10" fill="none" stroke="#f0e8ee" stroke-width="1.600"/><path d="M24 5v6M24 15v8" stroke="#f0e8ee" stroke-width="1.600"/></svg></svg>
<svg style="left:284px;top:429px" width="17" height="17"><svg x="0.50" y="0.50" width="15" height="15" viewBox="0 0 28 28" overflow="visible"><ellipse cx="13" cy="9" rx="10.500" ry="6.500" fill="#f6f0f2" stroke="#d03a4a" stroke-width="2.200"/><path d="M5 8l17 2" stroke="#c8c0c4" stroke-width="1"/><path d="M12 8l6 13M20 9l-6 12" stroke="#e8e8ee" stroke-width="1.600"/><circle cx="13" cy="23" r="2.800" fill="none" stroke="#2f7fd8" stroke-width="2.200"/><circle cx="21" cy="22.500" r="2.800" fill="none" stroke="#2f7fd8" stroke-width="2.200"/></svg></svg>
<svg style="left:315px;top:429px" width="17" height="17"><svg x="0.50" y="0.70" width="15.0" height="15.0" viewBox="0 0 30 30" overflow="visible"><defs><linearGradient id="eg1" x1="0" y1="0" x2="1" y2="1"><stop offset="0" stop-color="#35c1a0"/><stop offset="0.500" stop-color="#1f9fd8"/><stop offset="1" stop-color="#0c59a4"/></linearGradient></defs><circle cx="15" cy="15" r="14" fill="url(#eg1)"/><path d="M1 15Q2 2 15 1q12 1 14 12-3-6-11-5-8 2-8 9 0 8 9 11-14 3-18-13z" fill="#2bb5d8" opacity="0.550"/><path d="M29 13q0 7-7 7-5 0-6-4 0-3 2-4-6 1-6 7 1 7 10 8 9-3 7-14z" fill="#0b4f9a"/><path d="M16 12q6-2 8 2 0 4-4 4-4-1-4-6z" fill="#3a1430"/><path d="M2 11Q6 1 16 1q10 1 13 11-5-7-14-5Q6 9 2 11z" fill="#4fd86a" opacity="0.800"/></svg></svg>
<svg style="left:346px;top:430px" width="17" height="16"><svg x="0.80" y="0.60" width="15.0" height="14.0" viewBox="0 0 30 28" overflow="visible"><path d="M1 3h10l3 3h15v20H1z" fill="#e9a520"/><path d="M1 8h28v18H1z" fill="#fbd35a"/><path d="M7 16h16v10H7z" fill="#3f8fdc"/><path d="M10 20h10v6H10z" fill="#fbd35a"/></svg></svg>
<svg style="left:378px;top:430px" width="19" height="17"><svg x="0.50" y="0.50" width="17.0" height="15.0" viewBox="0 0 34 30" overflow="visible"><path d="M2 20L16 8H6M16 8l4-6" stroke="#ea7a0c" stroke-width="3.400" fill="none" stroke-linecap="round" stroke-linejoin="round"/><ellipse cx="21" cy="18" rx="11" ry="9.500" fill="#ea7a0c"/><ellipse cx="21.500" cy="18" rx="6.500" ry="5.500" fill="#fff"/><ellipse cx="21.500" cy="18" rx="3.600" ry="3.100" fill="#265fa8"/></svg></svg>
<svg style="left:409px;top:430px" width="18" height="17"><svg x="0.40" y="0.00" width="15.6" height="15.0" viewBox="0 0 31 30" overflow="visible"><rect width="31" height="30" fill="#4a58d0"/><rect y="0" width="31" height="8" fill="#5a50d8"/><circle cx="7" cy="7" r="3.600" fill="#ff8a20"/><circle cx="20" cy="20" r="8" fill="#2faa60"/><path d="M14 17q5-3 9 1 2 4-3 6-6 0-6-7z" fill="#9fd0ee"/><path d="M2 14l8 3-5 8z" fill="#e8e0d8"/><path d="M14 3h5v7h-5z" fill="#f0f0f4"/><path d="M21 5h4v5h-4z" fill="#d8c8e8"/><path d="M2 24h10v4H2z" fill="#8a5ad0"/></svg></svg>
<svg style="left:440px;top:430px" width="18" height="18"><svg x="0.40" y="0.00" width="15.6" height="16.0" viewBox="0 0 32 32" overflow="visible"><path d="M16 1L2 15q-2 3 2 4l5 1-3 3 6 0-1 4 5-3 5 3-1-4 6 0-3-3 5-1q4-1 2-4z" fill="#15151a"/><path d="M16 4l-6 6 3 1.500 3-1.500 3 2 3-2z" fill="#f4f4f4"/><ellipse cx="16" cy="29.500" rx="5" ry="1.800" fill="#15151a"/><path d="M6 17q10 3 20 0" stroke="#55555f" stroke-width="1" fill="none"/></svg></svg>
<svg style="left:472px;top:430px" width="17" height="17"><svg x="0.00" y="0.20" width="15.0" height="15.0" viewBox="0 0 30 30" overflow="visible"><circle cx="15" cy="15" r="14.500" fill="#3fbf80"/><g fill="none" stroke="#e9fff2" stroke-width="1.500"><ellipse cx="15" cy="15" rx="10" ry="4"/><ellipse cx="15" cy="15" rx="10" ry="4" transform="rotate(60 15 15)"/><ellipse cx="15" cy="15" rx="10" ry="4" transform="rotate(120 15 15)"/></g><circle cx="15" cy="15" r="1.800" fill="#e9fff2"/></svg></svg>
<svg style="left:503px;top:429px" width="19" height="19"><svg x="0.40" y="0.80" width="16.5" height="16.5" viewBox="0 0 33 33" overflow="visible"><circle cx="14" cy="14" r="13.500" fill="#e8e8e8"/><path d="M14 14L2.300 7.200A13.500 13.500 0 0 1 25.700 7.200z" fill="#ea4335"/><path d="M14 14L25.700 7.200A13.500 13.500 0 0 1 14 27.500z" fill="#fbbc05"/><path d="M14 14L14 27.500A13.500 13.500 0 0 1 2.300 7.200z" fill="#34a853"/><circle cx="14" cy="14" r="6.300" fill="#fff"/><circle cx="14" cy="14" r="5" fill="#4285f4"/><circle cx="23" cy="23" r="8.500" fill="#0f5a3a"/><text x="23" y="27.300" font-family="Liberation Sans" font-size="12" font-weight="bold" fill="#e8f5ee" text-anchor="middle">S</text></svg></svg>
<svg style="left:582px;top:431px" width="16" height="14"><svg x="0.30" y="0.20" width="13.3" height="11.2" viewBox="0 0 30 26" overflow="visible"><circle cx="10" cy="9" r="6.500" fill="#f7b32a"/><path d="M7 25q-6 0-6-5.500t6-5.500q2-6 8.500-6t8 6q5.500 0 5.500 5.500T23.500 25z" fill="#e8f0fa"/><path d="M7 25q-6 0-6-5.500 3 4 8 3.500h16q2 0 4-3 0 5-5.500 5z" fill="#a9c8ee"/></svg></svg>
<span class="t" style="left:601.60px;top:433.60px;font-size:8px;line-height:9.60px;color:#f4eef0;letter-spacing:-0.121px;">78°F</span>
<svg style="left:629px;top:434px" width="10" height="10"><svg x="0.65" y="0.25" width="7.5" height="7.5" viewBox="0 0 16 16" overflow="visible"><path d="M2 11l6-6 6 6" stroke="#f4eef0" stroke-width="1.500" fill="none"/></svg></svg>
<svg style="left:643px;top:433px" width="12" height="12"><svg x="0.00" y="0.00" width="10" height="10" viewBox="0 0 16 16" overflow="visible"><rect x="2" y="4" width="9" height="8" rx="1" fill="none" stroke="#f4eef0" stroke-width="1.300"/><path d="M11 7l3.500-2v6L11 9" fill="none" stroke="#f4eef0" stroke-width="1.200"/><path d="M3 1.500h7M3 14.500h7" stroke="#f4eef0" stroke-width="1"/></svg></svg>
<svg style="left:657px;top:434px" width="14" height="9"><svg x="0.20" y="0.80" width="12.0" height="7.0" viewBox="0 0 24 14" overflow="visible"><rect x="1" y="1.500" width="19" height="11" fill="none" stroke="#f4eef0" stroke-width="2"/><rect x="3" y="3.500" width="8" height="7" fill="#f4eef0"/><rect x="21" y="4.500" width="2.500" height="5" fill="#f4eef0"/></svg></svg>
<svg style="left:672px;top:433px" width="13" height="13"><svg x="0.80" y="0.00" width="11.0" height="10.5" viewBox="0 0 22 21" overflow="visible"><g fill="none" stroke="#f4eef0" stroke-width="1.700"><path d="M2 20A18 18 0 0 1 20 2" opacity="0.900"/><path d="M7 20A13 13 0 0 1 20 7"/><path d="M12 20A8 8 0 0 1 20 12"/></g><circle cx="18.500" cy="18.500" r="2" fill="#f4eef0"/></svg></svg>
<svg style="left:686px;top:433px" width="15" height="12"><svg x="0.00" y="0.20" width="13.0" height="10.0" viewBox="0 0 26 20" overflow="visible"><path d="M2 7h4l6-5v16l-6-5H2z" fill="none" stroke="#f4eef0" stroke-width="1.600"/><path d="M16 7l6 6M22 7l-6 6" stroke="#f4eef0" stroke-width="1.600"/></svg></svg>
<span class="t" style="left:704.80px;top:433.88px;font-size:7.2px;line-height:8.64px;color:#f4eef0;letter-spacing:-0.368px;">ENG</span>
<span class="t" style="left:731.70px;top:427.70px;font-size:7.5px;line-height:9.00px;color:#f4eef0;letter-spacing:-0.190px;">2:21 PM</span>
<span class="t" style="left:727.70px;top:439.18px;font-size:7.7px;line-height:9.24px;color:#f4eef0;letter-spacing:-0.028px;">6/21/2021</span>
<svg style="left:773px;top:432px" width="13" height="13"><svg x="0.50" y="0.50" width="11.0" height="10.5" viewBox="0 0 22 21" overflow="visible"><path d="M2 2h18v13h-6l-3 3.500L8 15H2z" fill="none" stroke="#f4eef0" stroke-width="1.500"/></svg></svg>
<svg style="left:795px;top:424px" width="4" height="27"><rect x="1.50" y="1.00" width="0.60" height="25.00" rx="0.00" fill="rgba(255,255,255,0.350)"/></svg>
</body></html>
